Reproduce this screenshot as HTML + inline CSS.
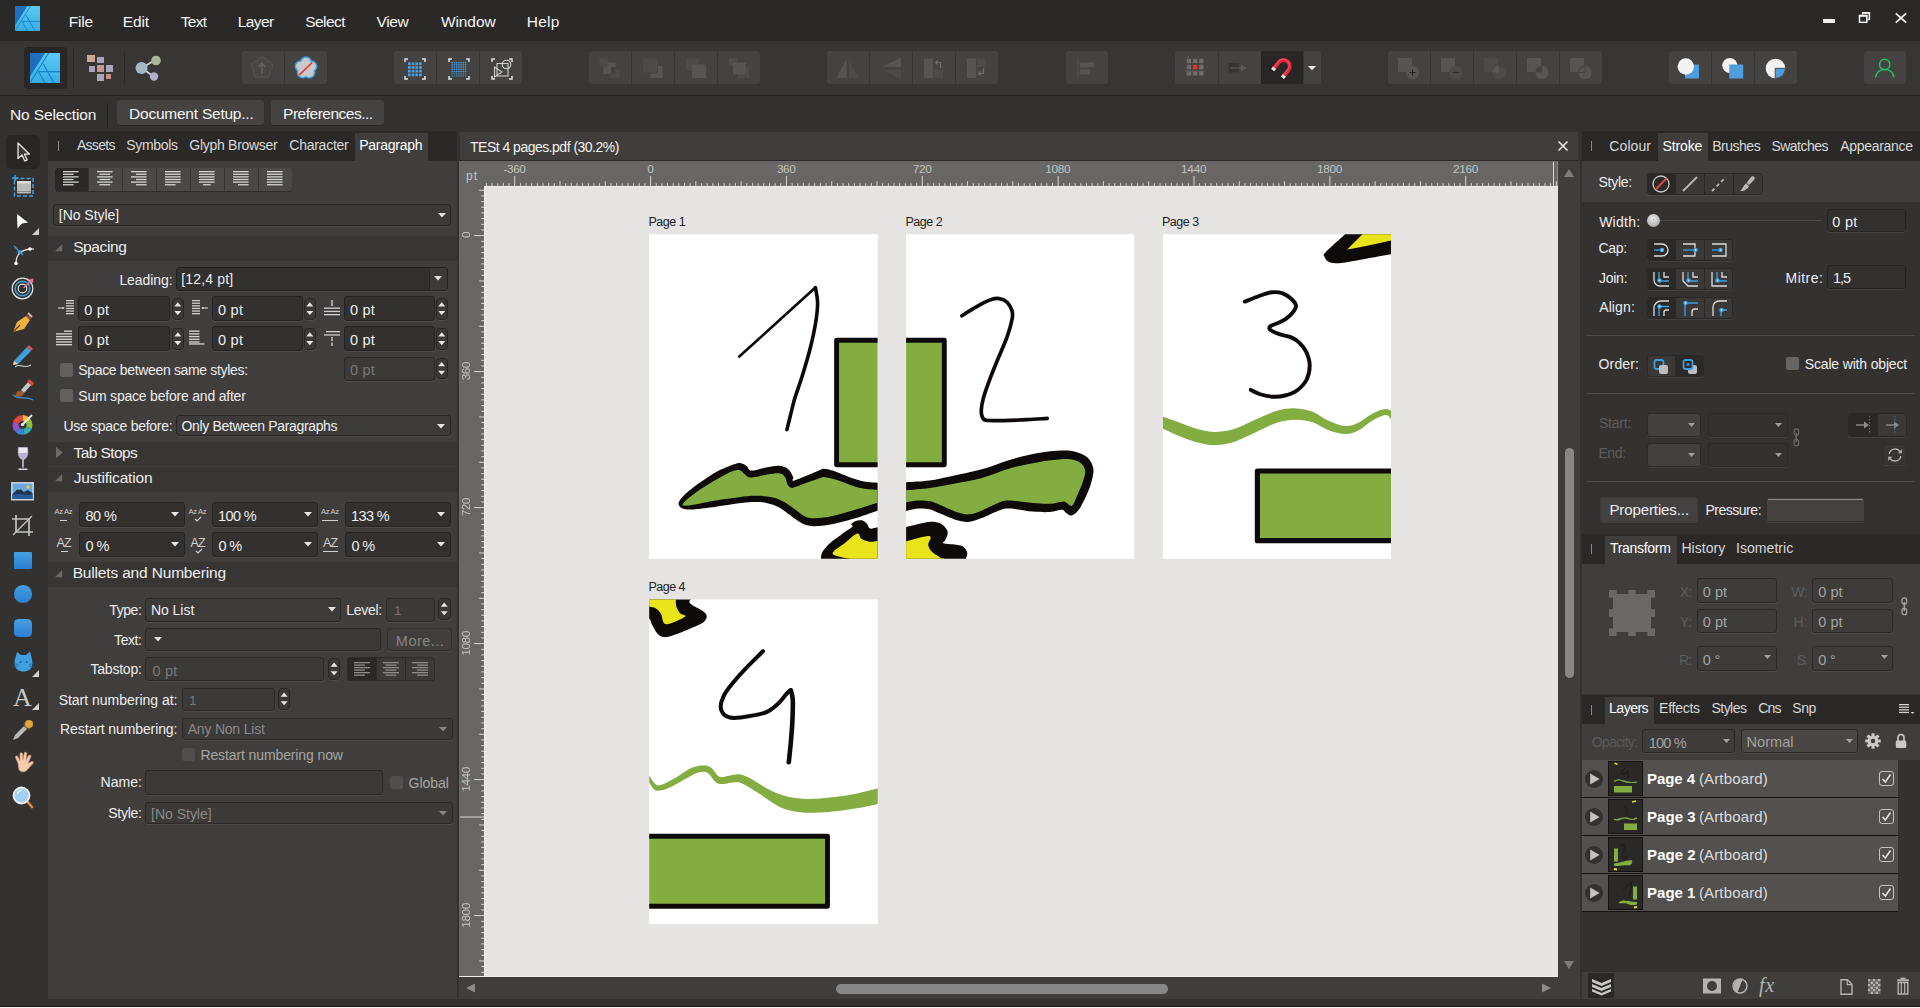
<!DOCTYPE html><html lang="en"><head><meta charset="utf-8"><title>Affinity Designer - TESt 4 pages.pdf</title><style>
*{box-sizing:border-box}
html,body{margin:0;padding:0}
body{width:1920px;height:1008px;overflow:hidden;position:relative;background:#333231;font-family:"Liberation Sans",sans-serif;}
body div,.a{position:absolute}
.t{white-space:nowrap}
svg{overflow:visible}
</style></head><body>
<!-- frame -->
<div style="left:0px;top:0px;width:1920px;height:41px;background:#2a2928"></div>
<div style="left:0px;top:41px;width:1920px;height:54px;background:#373635"></div>
<div style="left:0px;top:95px;width:1920px;height:1px;background:#222120"></div>
<div style="left:0px;top:96px;width:1920px;height:35px;background:#333231"></div>
<svg class="a" style="left:15px;top:6px;" width="25" height="25" viewBox="0 0 25 25"><g transform="scale(1.0)"><defs><linearGradient id="lg1" x1="0" y1="0" x2="0" y2="1"><stop offset="0" stop-color="#5ccbf5"/><stop offset="1" stop-color="#34ace4"/></linearGradient></defs><rect x="0" y="0" width="25" height="25" rx="0.5" fill="url(#lg1)"/><path d="M0 0H12.5L0 19.5Z" fill="#1e6fbe"/><path d="M15.5 0L0 25M7 15.5H25M11 9L20 25M7 15.5L12.5 25" stroke="#1a7fc4" stroke-width="0.9" fill="none"/></g></svg>
<div class="t" style="left:68.76px;top:10.50px;font-size:15.5px;line-height:22px;color:#f4f4f4;letter-spacing:-0.173px;">File</div>
<div class="t" style="left:122.76px;top:10.50px;font-size:15.5px;line-height:22px;color:#f4f4f4;letter-spacing:-0.114px;">Edit</div>
<div class="t" style="left:180.69px;top:10.50px;font-size:15.5px;line-height:22px;color:#f4f4f4;letter-spacing:-0.659px;">Text</div>
<div class="t" style="left:237.76px;top:10.50px;font-size:15.5px;line-height:22px;color:#f4f4f4;letter-spacing:-0.569px;">Layer</div>
<div class="t" style="left:305.30px;top:10.50px;font-size:15.5px;line-height:22px;color:#f4f4f4;letter-spacing:-0.587px;">Select</div>
<div class="t" style="left:376.62px;top:10.50px;font-size:15.5px;line-height:22px;color:#f4f4f4;letter-spacing:-0.416px;">View</div>
<div class="t" style="left:440.92px;top:10.50px;font-size:15.5px;line-height:22px;color:#f4f4f4;letter-spacing:-0.081px;">Window</div>
<div class="t" style="left:526.76px;top:10.50px;font-size:15.5px;line-height:22px;color:#f4f4f4;letter-spacing:0.236px;">Help</div>
<div style="left:1823px;top:19px;width:11.5px;height:4px;background:#f0f0f0"></div>
<svg class="a" style="left:1858px;top:11px;" width="14" height="14" viewBox="0 0 14 14"><path d="M4.6 3.8V1.9H11.4V8.6H9.4" fill="none" stroke="#f4f4f4" stroke-width="1.5"/><rect x="4.2" y="1.2" width="7.9" height="1.5" fill="#f4f4f4"/><rect x="1.5" y="4.6" width="7.3" height="6.7" fill="none" stroke="#f4f4f4" stroke-width="1.5"/><rect x="0.8" y="3.9" width="8.7" height="1.8" fill="#f4f4f4"/></svg>
<svg class="a" style="left:1894px;top:11px;" width="14" height="14" viewBox="0 0 14 14"><path d="M1.8 2.4L12.2 11.6M12.2 2.4L1.8 11.6" stroke="#f4f4f4" stroke-width="1.9" fill="none"/></svg>
<div class="t" style="left:10.06px;top:103.50px;font-size:15.5px;line-height:22px;color:#f4f4f4;letter-spacing:-0.149px;">No Selection</div>
<div style="left:107px;top:101px;width:1px;height:26px;background:#262524"></div>
<div style="left:117px;top:100px;width:147px;height:25px;background:#444342;border-radius:3px;box-shadow:0 1px 0 #2a2928"></div>
<div class="t" style="left:129.06px;top:102.50px;font-size:15.5px;line-height:22px;color:#f4f4f4;letter-spacing:-0.232px;">Document Setup...</div>
<div style="left:271px;top:100px;width:113px;height:25px;background:#444342;border-radius:3px;box-shadow:0 1px 0 #2a2928"></div>
<div class="t" style="left:283.06px;top:102.50px;font-size:15.5px;line-height:22px;color:#f4f4f4;letter-spacing:-0.490px;">Preferences...</div>
<div style="left:24px;top:47px;width:43px;height:42px;background:#282726;border-radius:4px"></div><svg class="a" style="left:30px;top:53px;" width="30" height="30" viewBox="0 0 30 30"><g transform="scale(1.2)"><defs><linearGradient id="lg2" x1="0" y1="0" x2="0" y2="1"><stop offset="0" stop-color="#5ccbf5"/><stop offset="1" stop-color="#34ace4"/></linearGradient></defs><rect x="0" y="0" width="25" height="25" rx="0.5" fill="url(#lg2)"/><path d="M0 0H12.5L0 19.5Z" fill="#1e6fbe"/><path d="M15.5 0L0 25M7 15.5H25M11 9L20 25M7 15.5L12.5 25" stroke="#1a7fc4" stroke-width="0.9" fill="none"/></g></svg><div style="left:73px;top:48px;width:1px;height:40px;background:#2a2928"></div><div style="left:87px;top:55px;width:8px;height:7px;background:#c9a896"></div><div style="left:97px;top:57px;width:7px;height:6px;background:#a9a5b6"></div><div style="left:89px;top:66px;width:6px;height:6px;background:#a9a5b6"></div><div style="left:97px;top:65px;width:7px;height:7px;background:#c49a90"></div><div style="left:106px;top:65px;width:7px;height:7px;background:#a9a5b6"></div><div style="left:97px;top:74px;width:7px;height:7px;background:#a9a5b6"></div><div style="left:106px;top:74px;width:5px;height:5px;background:#c98f8f"></div><div style="left:124px;top:52px;width:1px;height:32px;background:#2a2928"></div><svg class="a" style="left:134px;top:54px;" width="28" height="28" viewBox="0 0 28 28"><path d="M8 14L21 6M8 14L20 23" stroke="#d8d8d8" stroke-width="1.6"/><circle cx="7.5" cy="14" r="6" fill="#a3b8c4"/><circle cx="22" cy="6.5" r="4.8" fill="#a9b598"/><circle cx="20" cy="22.5" r="4.2" fill="#b5aecb"/></svg><div style="left:242px;top:51px;width:85.3px;height:33px;background:#444342;border-radius:3px"></div><div style="left:284.15px;top:51px;width:1px;height:33px;background:#373635"></div><div style="left:394px;top:51px;width:128.3px;height:33px;background:#444342;border-radius:3px"></div><div style="left:436.27px;top:51px;width:1px;height:33px;background:#373635"></div><div style="left:479.03px;top:51px;width:1px;height:33px;background:#373635"></div><div style="left:589px;top:51px;width:171px;height:33px;background:#444342;border-radius:3px"></div><div style="left:631.25px;top:51px;width:1px;height:33px;background:#373635"></div><div style="left:674px;top:51px;width:1px;height:33px;background:#373635"></div><div style="left:716.75px;top:51px;width:1px;height:33px;background:#373635"></div><div style="left:826.7px;top:51px;width:171.6px;height:33px;background:#444342;border-radius:3px"></div><div style="left:869.1px;top:51px;width:1px;height:33px;background:#373635"></div><div style="left:912px;top:51px;width:1px;height:33px;background:#373635"></div><div style="left:954.9px;top:51px;width:1px;height:33px;background:#373635"></div><div style="left:1065.7px;top:51px;width:42.6px;height:33px;background:#444342;border-radius:3px"></div><div style="left:1175px;top:51px;width:146px;height:33px;background:#444342;border-radius:3px"></div><div style="left:1217.5px;top:51px;width:1px;height:33px;background:#373635"></div><div style="left:1260.5px;top:51px;width:42.8px;height:33px;background:#282726"></div><div style="left:1303px;top:51px;width:1px;height:33px;background:#373635"></div><div style="left:1387.7px;top:51px;width:214.6px;height:33px;background:#444342;border-radius:3px"></div><div style="left:1430.12px;top:51px;width:1px;height:33px;background:#373635"></div><div style="left:1473.04px;top:51px;width:1px;height:33px;background:#373635"></div><div style="left:1515.96px;top:51px;width:1px;height:33px;background:#373635"></div><div style="left:1558.88px;top:51px;width:1px;height:33px;background:#373635"></div><div style="left:1669px;top:51px;width:128.3px;height:33px;background:#444342;border-radius:3px"></div><div style="left:1711.27px;top:51px;width:1px;height:33px;background:#373635"></div><div style="left:1754.03px;top:51px;width:1px;height:33px;background:#373635"></div><div style="left:1864px;top:51px;width:42px;height:33px;background:#444342;border-radius:3px"></div>
<div style="left:0px;top:1006px;width:1920px;height:1px;background:#1c1b1a"></div>
<div style="left:0px;top:1007px;width:1920px;height:1px;background:#f4f4f4"></div>
<!-- tbicons -->
<svg class="a" style="left:248px;top:54px;" width="28" height="28" viewBox="-14.0 -14.0 28 28"><circle cx="0.00" cy="-5.60" r="5.80" fill="#525150"/><circle cx="5.33" cy="-1.73" r="5.80" fill="#525150"/><circle cx="3.29" cy="4.53" r="5.80" fill="#525150"/><circle cx="-3.29" cy="4.53" r="5.80" fill="#525150"/><circle cx="-5.33" cy="-1.73" r="5.80" fill="#525150"/><circle cx="0.00" cy="-5.60" r="4.6" fill="#484746"/><circle cx="5.33" cy="-1.73" r="4.6" fill="#484746"/><circle cx="3.29" cy="4.53" r="4.6" fill="#484746"/><circle cx="-3.29" cy="4.53" r="4.6" fill="#484746"/><circle cx="-5.33" cy="-1.73" r="4.6" fill="#484746"/><circle r="5.6" fill="#484746"/><path d="M0 5.5V-3.5M-3 -1.2L0 -4.5L3 -1.2" stroke="#636261" stroke-width="1.7" fill="none"/></svg><svg class="a" style="left:292px;top:54px;" width="28" height="28" viewBox="-14.0 -14.0 28 28"><circle cx="0.00" cy="-5.60" r="6.10" fill="#3f9be0"/><circle cx="5.33" cy="-1.73" r="6.10" fill="#3f9be0"/><circle cx="3.29" cy="4.53" r="6.10" fill="#3f9be0"/><circle cx="-3.29" cy="4.53" r="6.10" fill="#3f9be0"/><circle cx="-5.33" cy="-1.73" r="6.10" fill="#3f9be0"/><circle cx="0.00" cy="-5.60" r="4.6" fill="#c8c8c8"/><circle cx="5.33" cy="-1.73" r="4.6" fill="#c8c8c8"/><circle cx="3.29" cy="4.53" r="4.6" fill="#c8c8c8"/><circle cx="-3.29" cy="4.53" r="4.6" fill="#c8c8c8"/><circle cx="-5.33" cy="-1.73" r="4.6" fill="#c8c8c8"/><circle r="5.6" fill="#c8c8c8"/><path d="M-6.8 7L6.2 -5.5" stroke="#e9302c" stroke-width="1.6"/></svg><svg class="a" style="left:400.5px;top:54.5px;" width="28" height="28" viewBox="-14.0 -14.0 28 28"><path d="M-10 -7V-10H-7M7 -10H10V-7M10 7V10H7M-7 10H-10V7" stroke="#e2e2e2" stroke-width="1.5" fill="none"/><rect x="-7.0" y="-6.6" width="2.7" height="2.7" fill="#4a9fe0"/><rect x="-7.0" y="-2.9" width="2.7" height="2.7" fill="#4a9fe0"/><rect x="-7.0" y="0.8" width="2.7" height="2.7" fill="#4a9fe0"/><rect x="-7.0" y="4.5" width="2.7" height="2.7" fill="#4a9fe0"/><rect x="-3.3" y="-6.6" width="2.7" height="2.7" fill="#4a9fe0"/><rect x="-3.3" y="-2.9" width="2.7" height="2.7" fill="#4a9fe0"/><rect x="-3.3" y="0.8" width="2.7" height="2.7" fill="#4a9fe0"/><rect x="-3.3" y="4.5" width="2.7" height="2.7" fill="#4a9fe0"/><rect x="0.4" y="-6.6" width="2.7" height="2.7" fill="#4a9fe0"/><rect x="0.4" y="-2.9" width="2.7" height="2.7" fill="#4a9fe0"/><rect x="0.4" y="0.8" width="2.7" height="2.7" fill="#4a9fe0"/><rect x="0.4" y="4.5" width="2.7" height="2.7" fill="#4a9fe0"/><rect x="4.1" y="-6.6" width="2.7" height="2.7" fill="#4a9fe0"/><rect x="4.1" y="-2.9" width="2.7" height="2.7" fill="#4a9fe0"/><rect x="4.1" y="0.8" width="2.7" height="2.7" fill="#4a9fe0"/><rect x="4.1" y="4.5" width="2.7" height="2.7" fill="#4a9fe0"/></svg><svg class="a" style="left:444.5px;top:54.5px;" width="28" height="28" viewBox="-14.0 -14.0 28 28"><path d="M-10 -7V-10H-7M7 -10H10V-7M10 7V10H7M-7 10H-10V7" stroke="#e2e2e2" stroke-width="1.5" fill="none"/><rect x="-7.4" y="-7.0" width="1.4" height="1.4" fill="#4a9fe0" opacity="0.95"/><rect x="-7.4" y="-4.8" width="1.4" height="1.4" fill="#4a9fe0" opacity="0.95"/><rect x="-7.4" y="-2.6" width="1.4" height="1.4" fill="#4a9fe0" opacity="0.95"/><rect x="-7.4" y="-0.4" width="1.4" height="1.4" fill="#4a9fe0" opacity="0.95"/><rect x="-7.4" y="1.8" width="1.4" height="1.4" fill="#4a9fe0" opacity="0.95"/><rect x="-7.4" y="4.0" width="1.4" height="1.4" fill="#4a9fe0" opacity="0.6"/><rect x="-7.4" y="6.2" width="1.4" height="1.4" fill="#4a9fe0" opacity="0.6"/><rect x="-5.2" y="-7.0" width="1.4" height="1.4" fill="#4a9fe0" opacity="0.95"/><rect x="-5.2" y="-4.8" width="1.4" height="1.4" fill="#4a9fe0" opacity="0.95"/><rect x="-5.2" y="-2.6" width="1.4" height="1.4" fill="#4a9fe0" opacity="0.95"/><rect x="-5.2" y="-0.4" width="1.4" height="1.4" fill="#4a9fe0" opacity="0.95"/><rect x="-5.2" y="1.8" width="1.4" height="1.4" fill="#4a9fe0" opacity="0.95"/><rect x="-5.2" y="4.0" width="1.4" height="1.4" fill="#4a9fe0" opacity="0.6"/><rect x="-5.2" y="6.2" width="1.4" height="1.4" fill="#4a9fe0" opacity="0.6"/><rect x="-3.0" y="-7.0" width="1.4" height="1.4" fill="#4a9fe0" opacity="0.95"/><rect x="-3.0" y="-4.8" width="1.4" height="1.4" fill="#4a9fe0" opacity="0.95"/><rect x="-3.0" y="-2.6" width="1.4" height="1.4" fill="#4a9fe0" opacity="0.95"/><rect x="-3.0" y="-0.4" width="1.4" height="1.4" fill="#4a9fe0" opacity="0.95"/><rect x="-3.0" y="1.8" width="1.4" height="1.4" fill="#4a9fe0" opacity="0.95"/><rect x="-3.0" y="4.0" width="1.4" height="1.4" fill="#4a9fe0" opacity="0.6"/><rect x="-3.0" y="6.2" width="1.4" height="1.4" fill="#4a9fe0" opacity="0.6"/><rect x="-0.8" y="-7.0" width="1.4" height="1.4" fill="#4a9fe0" opacity="0.95"/><rect x="-0.8" y="-4.8" width="1.4" height="1.4" fill="#4a9fe0" opacity="0.95"/><rect x="-0.8" y="-2.6" width="1.4" height="1.4" fill="#4a9fe0" opacity="0.95"/><rect x="-0.8" y="-0.4" width="1.4" height="1.4" fill="#4a9fe0" opacity="0.95"/><rect x="-0.8" y="1.8" width="1.4" height="1.4" fill="#4a9fe0" opacity="0.95"/><rect x="-0.8" y="4.0" width="1.4" height="1.4" fill="#4a9fe0" opacity="0.6"/><rect x="-0.8" y="6.2" width="1.4" height="1.4" fill="#4a9fe0" opacity="0.6"/><rect x="1.4" y="-7.0" width="1.4" height="1.4" fill="#4a9fe0" opacity="0.95"/><rect x="1.4" y="-4.8" width="1.4" height="1.4" fill="#4a9fe0" opacity="0.95"/><rect x="1.4" y="-2.6" width="1.4" height="1.4" fill="#4a9fe0" opacity="0.95"/><rect x="1.4" y="-0.4" width="1.4" height="1.4" fill="#4a9fe0" opacity="0.95"/><rect x="1.4" y="1.8" width="1.4" height="1.4" fill="#4a9fe0" opacity="0.95"/><rect x="1.4" y="4.0" width="1.4" height="1.4" fill="#4a9fe0" opacity="0.6"/><rect x="1.4" y="6.2" width="1.4" height="1.4" fill="#4a9fe0" opacity="0.6"/><rect x="3.6" y="-7.0" width="1.4" height="1.4" fill="#4a9fe0" opacity="0.95"/><rect x="3.6" y="-4.8" width="1.4" height="1.4" fill="#4a9fe0" opacity="0.95"/><rect x="3.6" y="-2.6" width="1.4" height="1.4" fill="#4a9fe0" opacity="0.95"/><rect x="3.6" y="-0.4" width="1.4" height="1.4" fill="#4a9fe0" opacity="0.95"/><rect x="3.6" y="1.8" width="1.4" height="1.4" fill="#4a9fe0" opacity="0.95"/><rect x="3.6" y="4.0" width="1.4" height="1.4" fill="#4a9fe0" opacity="0.6"/><rect x="3.6" y="6.2" width="1.4" height="1.4" fill="#4a9fe0" opacity="0.6"/><rect x="5.8" y="-7.0" width="1.4" height="1.4" fill="#4a9fe0" opacity="0.95"/><rect x="5.8" y="-4.8" width="1.4" height="1.4" fill="#4a9fe0" opacity="0.95"/><rect x="5.8" y="-2.6" width="1.4" height="1.4" fill="#4a9fe0" opacity="0.95"/><rect x="5.8" y="-0.4" width="1.4" height="1.4" fill="#4a9fe0" opacity="0.95"/><rect x="5.8" y="1.8" width="1.4" height="1.4" fill="#4a9fe0" opacity="0.95"/><rect x="5.8" y="4.0" width="1.4" height="1.4" fill="#4a9fe0" opacity="0.6"/><rect x="5.8" y="6.2" width="1.4" height="1.4" fill="#4a9fe0" opacity="0.6"/></svg><svg class="a" style="left:487.5px;top:54.5px;" width="28" height="28" viewBox="-14.0 -14.0 28 28"><path d="M-10 -7V-10H-7M7 -10H10V-7M10 7V10H7M-7 10H-10V7" stroke="#e2e2e2" stroke-width="1.5" fill="none"/><rect x="-5" y="-5.5" width="11" height="12.5" fill="none" stroke="#cfcfcf" stroke-width="1.1"/><circle cx="4.5" cy="-4.5" r="4.3" fill="none" stroke="#cfcfcf" stroke-width="1.1"/><path d="M-7.5 -2V8L0 3Z" fill="none" stroke="#cfcfcf" stroke-width="1.1"/></svg><svg class="a" style="left:596.38px;top:53.5px;" width="28" height="28" viewBox="-14.0 -14.0 28 28"><rect x="-10.5" y="-9.5" width="8" height="8" fill="#4c4b4a"/><rect x="-6.5" y="-5.5" width="12" height="11.5" fill="#565554"/><rect x="-6.5" y="-5.5" width="4" height="4.5" fill="#4c4b4a"/><rect x="1" y="2" width="8.5" height="8" fill="#4c4b4a"/><rect x="1" y="-1" width="4.5" height="7" fill="#434241"/><rect x="-6.5" y="6" width="7.5" height="2" fill="#434241"/></svg><svg class="a" style="left:639.12px;top:53.5px;" width="28" height="28" viewBox="-14.0 -14.0 28 28"><rect x="-10" y="-9.5" width="14" height="14" fill="#4c4b4a"/><path d="M5 -2H9.5V10H-2.5V5.5H5Z" fill="#565554"/></svg><svg class="a" style="left:681.88px;top:53.5px;" width="28" height="28" viewBox="-14.0 -14.0 28 28"><rect x="-10" y="-9.5" width="13" height="12" fill="#4c4b4a"/><rect x="-4" y="-3.5" width="14" height="13.5" fill="#565554"/></svg><svg class="a" style="left:724.62px;top:53.5px;" width="28" height="28" viewBox="-14.0 -14.0 28 28"><rect x="-10" y="-9.5" width="8" height="7" fill="#4c4b4a"/><rect x="-2" y="-1" width="12" height="11" fill="#4c4b4a"/><rect x="-6" y="-5.5" width="12.5" height="12" fill="#565554"/></svg><svg class="a" style="left:834.15px;top:53.5px;" width="28" height="28" viewBox="-14.0 -14.0 28 28"><path d="M-1.5 -9V10H-11.5Z" fill="#565554"/><path d="M1 -9V10H10.5Z" fill="#4c4b4a"/></svg><svg class="a" style="left:877.05px;top:53.5px;" width="28" height="28" viewBox="-14.0 -14.0 28 28"><path d="M10 -10.5V-1H-9.5Z" fill="#565554"/><path d="M-9.5 1.5H10V11Z" fill="#4c4b4a"/></svg><svg class="a" style="left:919.95px;top:53.5px;" width="28" height="28" viewBox="-14.0 -14.0 28 28"><rect x="-10" y="-9.5" width="9" height="19.5" fill="#565554"/><rect x="0" y="1.5" width="9" height="8.5" fill="#4c4b4a"/><path d="M6.5 0V-5.5H2M3.8 -7.5L1.5 -5.5L3.8 -3.5" stroke="#6e6d6c" stroke-width="1.2" fill="none"/></svg><svg class="a" style="left:962.85px;top:53.5px;" width="28" height="28" viewBox="-14.0 -14.0 28 28"><rect x="-10" y="-9.5" width="9" height="19.5" fill="#565554"/><rect x="0" y="-9.5" width="8.5" height="8.5" fill="#4c4b4a"/><path d="M6.5 0.5V5.5H2M3.8 3.5L1.5 5.5L3.8 7.5" stroke="#6e6d6c" stroke-width="1.2" fill="none"/></svg><svg class="a" style="left:1073px;top:53.5px;" width="28" height="28" viewBox="-14.0 -14.0 28 28"><rect x="-10" y="-9.5" width="1.5" height="19.5" fill="#4c4b4a"/><rect x="-7" y="-5.5" width="14.5" height="4.8" fill="#565554"/><rect x="-7" y="1.5" width="10" height="4.8" fill="#565554"/></svg><svg class="a" style="left:1180.8px;top:53.3px;" width="28" height="28" viewBox="-14.0 -14.0 28 28"><rect x="-8.3" y="-8.3" width="4.4" height="4.4" fill="#6e6d6c"/><rect x="-8.3" y="-2.1" width="4.4" height="4.4" fill="#6e6d6c"/><rect x="-8.3" y="4.1" width="4.4" height="4.4" fill="#6e6d6c"/><rect x="-2.1" y="-8.3" width="4.4" height="4.4" fill="#6e6d6c"/><rect x="-2.1" y="-2.1" width="4.4" height="4.4" fill="#e8302c"/><rect x="-2.1" y="4.1" width="4.4" height="4.4" fill="#6e6d6c"/><rect x="4.1" y="-8.3" width="4.4" height="4.4" fill="#6e6d6c"/><rect x="4.1" y="-2.1" width="4.4" height="4.4" fill="#6e6d6c"/><rect x="4.1" y="4.1" width="4.4" height="4.4" fill="#6e6d6c"/><path d="M-6.5 -11V10M-10.5 4H10.5" stroke="#5e5d5c" stroke-width="0.8"/></svg><svg class="a" style="left:1224.5px;top:53.6px;" width="28" height="28" viewBox="-14.0 -14.0 28 28"><rect x="-10.5" y="-5" width="10.5" height="9.5" fill="#363534"/><path d="M-9 0H3" stroke="#5c5b5a" stroke-width="1.2"/><path d="M2 -3.2L7.5 0L2 3.2Z" fill="#5c5b5a"/></svg><svg class="a" style="left:1269px;top:53.3px;" width="28" height="28" viewBox="-14.0 -14.0 28 28"><g transform="rotate(38)"><path d="M-6.2 7.5V-1A6.2 6.2 0 0 1 6.2 -1V7.5" fill="none" stroke="#e0243c" stroke-width="4"/><path d="M-6.2 7.5V-1A6.2 6.2 0 0 1 6.2 -1V7.5" fill="none" stroke="#f05a6a" stroke-width="1" transform="translate(-0.9 -0.3)"/><rect x="-8.2" y="5.8" width="4" height="3" fill="#e4e4e4"/><rect x="4.2" y="5.8" width="4" height="3" fill="#e4e4e4"/></g></svg><svg class="a" style="left:1308.00px;top:65.90px" width="8" height="4.2" viewBox="0 0 8 4.2"><path d="M0 0H8L4.0 4.2Z" fill="#f2f2f2"/></svg><svg class="a" style="left:1395.16px;top:54px;" width="28" height="28" viewBox="-14.0 -14.0 28 28"><rect x="-11" y="-10" width="14" height="14" fill="#565554"/><circle cx="3.5" cy="4.5" r="6.6" fill="#565554"/><path d="M0.5 4.5H6.5M3.5 1.5V7.5" stroke="#232221" stroke-width="1.1"/></svg><svg class="a" style="left:1438.08px;top:54px;" width="28" height="28" viewBox="-14.0 -14.0 28 28"><rect x="-11" y="-10" width="14" height="14" fill="#565554"/><circle cx="4" cy="4.5" r="6.6" fill="#4c4b4a"/><path d="M1 4.5H7" stroke="#2c2b2a" stroke-width="1.1"/></svg><svg class="a" style="left:1481px;top:54px;" width="28" height="28" viewBox="-14.0 -14.0 28 28"><rect x="-11" y="-10" width="14" height="14" fill="#4c4b4a"/><circle cx="4" cy="4.5" r="6.6" fill="#4c4b4a"/><path d="M4 4.5V-2.1A6.6 6.6 0 0 0 -2.6 4.5Z" fill="#5a5958"/></svg><svg class="a" style="left:1523.92px;top:54px;" width="28" height="28" viewBox="-14.0 -14.0 28 28"><rect x="-11" y="-10" width="14" height="14" fill="#565554"/><circle cx="4" cy="4.5" r="6.6" fill="#565554"/><path d="M4 4.5V-2.1A6.6 6.6 0 0 0 -2.6 4.5Z" fill="#434241"/></svg><svg class="a" style="left:1566.84px;top:54px;" width="28" height="28" viewBox="-14.0 -14.0 28 28"><rect x="-11" y="-10" width="14" height="14" fill="#565554"/><circle cx="4" cy="4.5" r="6.6" fill="#565554"/><path d="M4 4.5V-2.1A6.6 6.6 0 0 0 -2.6 4.5Z" fill="none" stroke="#434241" stroke-width="0.9"/></svg><svg class="a" style="left:1676.12px;top:53.5px;" width="28" height="28" viewBox="-14.0 -14.0 28 28"><rect x="-5" y="-3.5" width="14" height="14" fill="#4f9edb"/><circle cx="-4.2" cy="-1.5" r="8.2" fill="#f3f2f2"/></svg><svg class="a" style="left:1718.88px;top:53.5px;" width="28" height="28" viewBox="-14.0 -14.0 28 28"><circle cx="-3.2" cy="-2.5" r="7.6" fill="#f3f2f2"/><rect x="-3.8" y="-3.5" width="14" height="14" fill="#4f9edb"/></svg><svg class="a" style="left:1761.62px;top:53.5px;" width="28" height="28" viewBox="-14.0 -14.0 28 28"><circle cx="-0.5" cy="0.5" r="9.8" fill="#f3f2f2"/><path d="M-0.8 0.3H9.3A9.8 9.8 0 0 1 -0.8 10.3Z" fill="#4f9edb" stroke="#434241" stroke-width="0.9"/></svg><svg class="a" style="left:1871px;top:54px;" width="28" height="28" viewBox="-14.0 -14.0 28 28"><circle cx="-0.3" cy="-3.5" r="5.2" fill="none" stroke="#21c064" stroke-width="1.5"/><path d="M-9.5 9.5A9.3 9.3 0 0 1 9 9.5" fill="none" stroke="#21c064" stroke-width="1.5"/></svg>
<!-- canvas -->
<div style="left:460px;top:132px;width:1118px;height:29px;background:#3f3e3d"></div>
<div class="t" style="left:470.02px;top:137.00px;font-size:14px;line-height:20px;color:#f2f2f2;letter-spacing:-0.511px;">TESt 4 pages.pdf (30.2%)</div>
<svg class="a" style="left:1557px;top:140px;" width="12" height="12" viewBox="0 0 12 12"><path d="M1.5 1.5L10.5 10.5M10.5 1.5L1.5 10.5" stroke="#f0f0f0" stroke-width="1.5" fill="none"/></svg>
<div style="left:459px;top:161px;width:1099px;height:25px;background:#686765"></div>
<div style="left:459px;top:161px;width:25px;height:815px;background:#686765"></div>
<div style="left:459px;top:160px;width:1119px;height:1px;background:#2a2928"></div>
<div style="left:484px;top:186px;width:1074px;height:790px;background:#e5e4e3"></div>
<svg class="a" style="left:459px;top:161px;" width="1099" height="25" viewBox="0 0 1099 25"><rect x="26.90" y="22.2" width="1" height="2.8" fill="#d6d6d5"/><rect x="32.56" y="22.2" width="1" height="2.8" fill="#d6d6d5"/><rect x="38.22" y="22.2" width="1" height="2.8" fill="#d6d6d5"/><rect x="43.88" y="22.2" width="1" height="2.8" fill="#d6d6d5"/><rect x="49.54" y="22.2" width="1" height="2.8" fill="#d6d6d5"/><rect x="55.20" y="15" width="1" height="10" fill="#d6d6d5"/><rect x="60.86" y="22.2" width="1" height="2.8" fill="#d6d6d5"/><rect x="66.52" y="22.2" width="1" height="2.8" fill="#d6d6d5"/><rect x="72.18" y="22.2" width="1" height="2.8" fill="#d6d6d5"/><rect x="77.84" y="22.2" width="1" height="2.8" fill="#d6d6d5"/><rect x="83.50" y="22.2" width="1" height="2.8" fill="#d6d6d5"/><rect x="89.16" y="22.2" width="1" height="2.8" fill="#d6d6d5"/><rect x="94.83" y="22.2" width="1" height="2.8" fill="#d6d6d5"/><rect x="100.49" y="20.2" width="1" height="4.8" fill="#d6d6d5"/><rect x="106.15" y="22.2" width="1" height="2.8" fill="#d6d6d5"/><rect x="111.81" y="22.2" width="1" height="2.8" fill="#d6d6d5"/><rect x="117.47" y="22.2" width="1" height="2.8" fill="#d6d6d5"/><rect x="123.13" y="22.2" width="1" height="2.8" fill="#d6d6d5"/><rect x="128.79" y="22.2" width="1" height="2.8" fill="#d6d6d5"/><rect x="134.45" y="22.2" width="1" height="2.8" fill="#d6d6d5"/><rect x="140.11" y="22.2" width="1" height="2.8" fill="#d6d6d5"/><rect x="145.77" y="20.2" width="1" height="4.8" fill="#d6d6d5"/><rect x="151.43" y="22.2" width="1" height="2.8" fill="#d6d6d5"/><rect x="157.09" y="22.2" width="1" height="2.8" fill="#d6d6d5"/><rect x="162.76" y="22.2" width="1" height="2.8" fill="#d6d6d5"/><rect x="168.42" y="22.2" width="1" height="2.8" fill="#d6d6d5"/><rect x="174.08" y="22.2" width="1" height="2.8" fill="#d6d6d5"/><rect x="179.74" y="22.2" width="1" height="2.8" fill="#d6d6d5"/><rect x="185.40" y="22.2" width="1" height="2.8" fill="#d6d6d5"/><rect x="191.06" y="15" width="1" height="10" fill="#d6d6d5"/><rect x="196.72" y="22.2" width="1" height="2.8" fill="#d6d6d5"/><rect x="202.38" y="22.2" width="1" height="2.8" fill="#d6d6d5"/><rect x="208.04" y="22.2" width="1" height="2.8" fill="#d6d6d5"/><rect x="213.70" y="22.2" width="1" height="2.8" fill="#d6d6d5"/><rect x="219.36" y="22.2" width="1" height="2.8" fill="#d6d6d5"/><rect x="225.02" y="22.2" width="1" height="2.8" fill="#d6d6d5"/><rect x="230.69" y="22.2" width="1" height="2.8" fill="#d6d6d5"/><rect x="236.35" y="20.2" width="1" height="4.8" fill="#d6d6d5"/><rect x="242.01" y="22.2" width="1" height="2.8" fill="#d6d6d5"/><rect x="247.67" y="22.2" width="1" height="2.8" fill="#d6d6d5"/><rect x="253.33" y="22.2" width="1" height="2.8" fill="#d6d6d5"/><rect x="258.99" y="22.2" width="1" height="2.8" fill="#d6d6d5"/><rect x="264.65" y="22.2" width="1" height="2.8" fill="#d6d6d5"/><rect x="270.31" y="22.2" width="1" height="2.8" fill="#d6d6d5"/><rect x="275.97" y="22.2" width="1" height="2.8" fill="#d6d6d5"/><rect x="281.63" y="20.2" width="1" height="4.8" fill="#d6d6d5"/><rect x="287.29" y="22.2" width="1" height="2.8" fill="#d6d6d5"/><rect x="292.95" y="22.2" width="1" height="2.8" fill="#d6d6d5"/><rect x="298.62" y="22.2" width="1" height="2.8" fill="#d6d6d5"/><rect x="304.28" y="22.2" width="1" height="2.8" fill="#d6d6d5"/><rect x="309.94" y="22.2" width="1" height="2.8" fill="#d6d6d5"/><rect x="315.60" y="22.2" width="1" height="2.8" fill="#d6d6d5"/><rect x="321.26" y="22.2" width="1" height="2.8" fill="#d6d6d5"/><rect x="326.92" y="15" width="1" height="10" fill="#d6d6d5"/><rect x="332.58" y="22.2" width="1" height="2.8" fill="#d6d6d5"/><rect x="338.24" y="22.2" width="1" height="2.8" fill="#d6d6d5"/><rect x="343.90" y="22.2" width="1" height="2.8" fill="#d6d6d5"/><rect x="349.56" y="22.2" width="1" height="2.8" fill="#d6d6d5"/><rect x="355.22" y="22.2" width="1" height="2.8" fill="#d6d6d5"/><rect x="360.88" y="22.2" width="1" height="2.8" fill="#d6d6d5"/><rect x="366.55" y="22.2" width="1" height="2.8" fill="#d6d6d5"/><rect x="372.21" y="20.2" width="1" height="4.8" fill="#d6d6d5"/><rect x="377.87" y="22.2" width="1" height="2.8" fill="#d6d6d5"/><rect x="383.53" y="22.2" width="1" height="2.8" fill="#d6d6d5"/><rect x="389.19" y="22.2" width="1" height="2.8" fill="#d6d6d5"/><rect x="394.85" y="22.2" width="1" height="2.8" fill="#d6d6d5"/><rect x="400.51" y="22.2" width="1" height="2.8" fill="#d6d6d5"/><rect x="406.17" y="22.2" width="1" height="2.8" fill="#d6d6d5"/><rect x="411.83" y="22.2" width="1" height="2.8" fill="#d6d6d5"/><rect x="417.49" y="20.2" width="1" height="4.8" fill="#d6d6d5"/><rect x="423.15" y="22.2" width="1" height="2.8" fill="#d6d6d5"/><rect x="428.81" y="22.2" width="1" height="2.8" fill="#d6d6d5"/><rect x="434.48" y="22.2" width="1" height="2.8" fill="#d6d6d5"/><rect x="440.14" y="22.2" width="1" height="2.8" fill="#d6d6d5"/><rect x="445.80" y="22.2" width="1" height="2.8" fill="#d6d6d5"/><rect x="451.46" y="22.2" width="1" height="2.8" fill="#d6d6d5"/><rect x="457.12" y="22.2" width="1" height="2.8" fill="#d6d6d5"/><rect x="462.78" y="15" width="1" height="10" fill="#d6d6d5"/><rect x="468.44" y="22.2" width="1" height="2.8" fill="#d6d6d5"/><rect x="474.10" y="22.2" width="1" height="2.8" fill="#d6d6d5"/><rect x="479.76" y="22.2" width="1" height="2.8" fill="#d6d6d5"/><rect x="485.42" y="22.2" width="1" height="2.8" fill="#d6d6d5"/><rect x="491.08" y="22.2" width="1" height="2.8" fill="#d6d6d5"/><rect x="496.74" y="22.2" width="1" height="2.8" fill="#d6d6d5"/><rect x="502.41" y="22.2" width="1" height="2.8" fill="#d6d6d5"/><rect x="508.07" y="20.2" width="1" height="4.8" fill="#d6d6d5"/><rect x="513.73" y="22.2" width="1" height="2.8" fill="#d6d6d5"/><rect x="519.39" y="22.2" width="1" height="2.8" fill="#d6d6d5"/><rect x="525.05" y="22.2" width="1" height="2.8" fill="#d6d6d5"/><rect x="530.71" y="22.2" width="1" height="2.8" fill="#d6d6d5"/><rect x="536.37" y="22.2" width="1" height="2.8" fill="#d6d6d5"/><rect x="542.03" y="22.2" width="1" height="2.8" fill="#d6d6d5"/><rect x="547.69" y="22.2" width="1" height="2.8" fill="#d6d6d5"/><rect x="553.35" y="20.2" width="1" height="4.8" fill="#d6d6d5"/><rect x="559.01" y="22.2" width="1" height="2.8" fill="#d6d6d5"/><rect x="564.67" y="22.2" width="1" height="2.8" fill="#d6d6d5"/><rect x="570.34" y="22.2" width="1" height="2.8" fill="#d6d6d5"/><rect x="576.00" y="22.2" width="1" height="2.8" fill="#d6d6d5"/><rect x="581.66" y="22.2" width="1" height="2.8" fill="#d6d6d5"/><rect x="587.32" y="22.2" width="1" height="2.8" fill="#d6d6d5"/><rect x="592.98" y="22.2" width="1" height="2.8" fill="#d6d6d5"/><rect x="598.64" y="15" width="1" height="10" fill="#d6d6d5"/><rect x="604.30" y="22.2" width="1" height="2.8" fill="#d6d6d5"/><rect x="609.96" y="22.2" width="1" height="2.8" fill="#d6d6d5"/><rect x="615.62" y="22.2" width="1" height="2.8" fill="#d6d6d5"/><rect x="621.28" y="22.2" width="1" height="2.8" fill="#d6d6d5"/><rect x="626.94" y="22.2" width="1" height="2.8" fill="#d6d6d5"/><rect x="632.61" y="22.2" width="1" height="2.8" fill="#d6d6d5"/><rect x="638.27" y="22.2" width="1" height="2.8" fill="#d6d6d5"/><rect x="643.93" y="20.2" width="1" height="4.8" fill="#d6d6d5"/><rect x="649.59" y="22.2" width="1" height="2.8" fill="#d6d6d5"/><rect x="655.25" y="22.2" width="1" height="2.8" fill="#d6d6d5"/><rect x="660.91" y="22.2" width="1" height="2.8" fill="#d6d6d5"/><rect x="666.57" y="22.2" width="1" height="2.8" fill="#d6d6d5"/><rect x="672.23" y="22.2" width="1" height="2.8" fill="#d6d6d5"/><rect x="677.89" y="22.2" width="1" height="2.8" fill="#d6d6d5"/><rect x="683.55" y="22.2" width="1" height="2.8" fill="#d6d6d5"/><rect x="689.21" y="20.2" width="1" height="4.8" fill="#d6d6d5"/><rect x="694.87" y="22.2" width="1" height="2.8" fill="#d6d6d5"/><rect x="700.53" y="22.2" width="1" height="2.8" fill="#d6d6d5"/><rect x="706.20" y="22.2" width="1" height="2.8" fill="#d6d6d5"/><rect x="711.86" y="22.2" width="1" height="2.8" fill="#d6d6d5"/><rect x="717.52" y="22.2" width="1" height="2.8" fill="#d6d6d5"/><rect x="723.18" y="22.2" width="1" height="2.8" fill="#d6d6d5"/><rect x="728.84" y="22.2" width="1" height="2.8" fill="#d6d6d5"/><rect x="734.50" y="15" width="1" height="10" fill="#d6d6d5"/><rect x="740.16" y="22.2" width="1" height="2.8" fill="#d6d6d5"/><rect x="745.82" y="22.2" width="1" height="2.8" fill="#d6d6d5"/><rect x="751.48" y="22.2" width="1" height="2.8" fill="#d6d6d5"/><rect x="757.14" y="22.2" width="1" height="2.8" fill="#d6d6d5"/><rect x="762.80" y="22.2" width="1" height="2.8" fill="#d6d6d5"/><rect x="768.46" y="22.2" width="1" height="2.8" fill="#d6d6d5"/><rect x="774.13" y="22.2" width="1" height="2.8" fill="#d6d6d5"/><rect x="779.79" y="20.2" width="1" height="4.8" fill="#d6d6d5"/><rect x="785.45" y="22.2" width="1" height="2.8" fill="#d6d6d5"/><rect x="791.11" y="22.2" width="1" height="2.8" fill="#d6d6d5"/><rect x="796.77" y="22.2" width="1" height="2.8" fill="#d6d6d5"/><rect x="802.43" y="22.2" width="1" height="2.8" fill="#d6d6d5"/><rect x="808.09" y="22.2" width="1" height="2.8" fill="#d6d6d5"/><rect x="813.75" y="22.2" width="1" height="2.8" fill="#d6d6d5"/><rect x="819.41" y="22.2" width="1" height="2.8" fill="#d6d6d5"/><rect x="825.07" y="20.2" width="1" height="4.8" fill="#d6d6d5"/><rect x="830.73" y="22.2" width="1" height="2.8" fill="#d6d6d5"/><rect x="836.39" y="22.2" width="1" height="2.8" fill="#d6d6d5"/><rect x="842.06" y="22.2" width="1" height="2.8" fill="#d6d6d5"/><rect x="847.72" y="22.2" width="1" height="2.8" fill="#d6d6d5"/><rect x="853.38" y="22.2" width="1" height="2.8" fill="#d6d6d5"/><rect x="859.04" y="22.2" width="1" height="2.8" fill="#d6d6d5"/><rect x="864.70" y="22.2" width="1" height="2.8" fill="#d6d6d5"/><rect x="870.36" y="15" width="1" height="10" fill="#d6d6d5"/><rect x="876.02" y="22.2" width="1" height="2.8" fill="#d6d6d5"/><rect x="881.68" y="22.2" width="1" height="2.8" fill="#d6d6d5"/><rect x="887.34" y="22.2" width="1" height="2.8" fill="#d6d6d5"/><rect x="893.00" y="22.2" width="1" height="2.8" fill="#d6d6d5"/><rect x="898.66" y="22.2" width="1" height="2.8" fill="#d6d6d5"/><rect x="904.32" y="22.2" width="1" height="2.8" fill="#d6d6d5"/><rect x="909.99" y="22.2" width="1" height="2.8" fill="#d6d6d5"/><rect x="915.65" y="20.2" width="1" height="4.8" fill="#d6d6d5"/><rect x="921.31" y="22.2" width="1" height="2.8" fill="#d6d6d5"/><rect x="926.97" y="22.2" width="1" height="2.8" fill="#d6d6d5"/><rect x="932.63" y="22.2" width="1" height="2.8" fill="#d6d6d5"/><rect x="938.29" y="22.2" width="1" height="2.8" fill="#d6d6d5"/><rect x="943.95" y="22.2" width="1" height="2.8" fill="#d6d6d5"/><rect x="949.61" y="22.2" width="1" height="2.8" fill="#d6d6d5"/><rect x="955.27" y="22.2" width="1" height="2.8" fill="#d6d6d5"/><rect x="960.93" y="20.2" width="1" height="4.8" fill="#d6d6d5"/><rect x="966.59" y="22.2" width="1" height="2.8" fill="#d6d6d5"/><rect x="972.26" y="22.2" width="1" height="2.8" fill="#d6d6d5"/><rect x="977.92" y="22.2" width="1" height="2.8" fill="#d6d6d5"/><rect x="983.58" y="22.2" width="1" height="2.8" fill="#d6d6d5"/><rect x="989.24" y="22.2" width="1" height="2.8" fill="#d6d6d5"/><rect x="994.90" y="22.2" width="1" height="2.8" fill="#d6d6d5"/><rect x="1000.56" y="22.2" width="1" height="2.8" fill="#d6d6d5"/><rect x="1006.22" y="15" width="1" height="10" fill="#d6d6d5"/><rect x="1011.88" y="22.2" width="1" height="2.8" fill="#d6d6d5"/><rect x="1017.54" y="22.2" width="1" height="2.8" fill="#d6d6d5"/><rect x="1023.20" y="22.2" width="1" height="2.8" fill="#d6d6d5"/><rect x="1028.86" y="22.2" width="1" height="2.8" fill="#d6d6d5"/><rect x="1034.52" y="22.2" width="1" height="2.8" fill="#d6d6d5"/><rect x="1040.18" y="22.2" width="1" height="2.8" fill="#d6d6d5"/><rect x="1045.85" y="22.2" width="1" height="2.8" fill="#d6d6d5"/><rect x="1051.51" y="20.2" width="1" height="4.8" fill="#d6d6d5"/><rect x="1057.17" y="22.2" width="1" height="2.8" fill="#d6d6d5"/><rect x="1062.83" y="22.2" width="1" height="2.8" fill="#d6d6d5"/><rect x="1068.49" y="22.2" width="1" height="2.8" fill="#d6d6d5"/><rect x="1074.15" y="22.2" width="1" height="2.8" fill="#d6d6d5"/><rect x="1079.81" y="22.2" width="1" height="2.8" fill="#d6d6d5"/><rect x="1085.47" y="22.2" width="1" height="2.8" fill="#d6d6d5"/><rect x="1091.13" y="22.2" width="1" height="2.8" fill="#d6d6d5"/><rect x="1096.79" y="20.2" width="1" height="4.8" fill="#d6d6d5"/><rect x="1094" y="1" width="1" height="24" fill="#d8d8d8"/></svg><div class="t" style="left:503.42px;top:160.50px;font-size:11.8px;line-height:17px;color:#c2c2c1;letter-spacing:-0.385px;">-360</div><div class="t" style="left:647.34px;top:160.50px;font-size:11.8px;line-height:17px;color:#c2c2c1;letter-spacing:-0.164px;">0</div><div class="t" style="left:776.90px;top:160.50px;font-size:11.8px;line-height:17px;color:#c2c2c1;letter-spacing:-0.331px;">360</div><div class="t" style="left:912.64px;top:160.50px;font-size:11.8px;line-height:17px;color:#c2c2c1;letter-spacing:-0.272px;">720</div><div class="t" style="left:1045.15px;top:160.50px;font-size:11.8px;line-height:17px;color:#c2c2c1;letter-spacing:-0.252px;">1080</div><div class="t" style="left:1181.02px;top:160.50px;font-size:11.8px;line-height:17px;color:#c2c2c1;letter-spacing:-0.252px;">1440</div><div class="t" style="left:1316.88px;top:160.50px;font-size:11.8px;line-height:17px;color:#c2c2c1;letter-spacing:-0.252px;">1800</div><div class="t" style="left:1453.03px;top:160.50px;font-size:11.8px;line-height:17px;color:#c2c2c1;letter-spacing:-0.351px;">2160</div><div class="t" style="left:466.12px;top:167.50px;font-size:12px;line-height:17px;color:#c2c2c1;letter-spacing:0.880px;">pt</div><svg class="a" style="left:459px;top:161px;" width="25" height="815" viewBox="0 0 25 815"><rect y="28.77" x="20.2" height="1" width="4.8" fill="#d6d6d5"/><rect y="34.43" x="22.2" height="1" width="2.8" fill="#d6d6d5"/><rect y="40.10" x="22.2" height="1" width="2.8" fill="#d6d6d5"/><rect y="45.77" x="22.2" height="1" width="2.8" fill="#d6d6d5"/><rect y="51.43" x="22.2" height="1" width="2.8" fill="#d6d6d5"/><rect y="57.10" x="22.2" height="1" width="2.8" fill="#d6d6d5"/><rect y="62.77" x="22.2" height="1" width="2.8" fill="#d6d6d5"/><rect y="68.43" x="22.2" height="1" width="2.8" fill="#d6d6d5"/><rect y="74.10" x="15" height="1" width="10" fill="#d6d6d5"/><rect y="79.77" x="22.2" height="1" width="2.8" fill="#d6d6d5"/><rect y="85.43" x="22.2" height="1" width="2.8" fill="#d6d6d5"/><rect y="91.10" x="22.2" height="1" width="2.8" fill="#d6d6d5"/><rect y="96.77" x="22.2" height="1" width="2.8" fill="#d6d6d5"/><rect y="102.43" x="22.2" height="1" width="2.8" fill="#d6d6d5"/><rect y="108.10" x="22.2" height="1" width="2.8" fill="#d6d6d5"/><rect y="113.77" x="22.2" height="1" width="2.8" fill="#d6d6d5"/><rect y="119.43" x="20.2" height="1" width="4.8" fill="#d6d6d5"/><rect y="125.10" x="22.2" height="1" width="2.8" fill="#d6d6d5"/><rect y="130.77" x="22.2" height="1" width="2.8" fill="#d6d6d5"/><rect y="136.43" x="22.2" height="1" width="2.8" fill="#d6d6d5"/><rect y="142.10" x="22.2" height="1" width="2.8" fill="#d6d6d5"/><rect y="147.77" x="22.2" height="1" width="2.8" fill="#d6d6d5"/><rect y="153.43" x="22.2" height="1" width="2.8" fill="#d6d6d5"/><rect y="159.10" x="22.2" height="1" width="2.8" fill="#d6d6d5"/><rect y="164.77" x="20.2" height="1" width="4.8" fill="#d6d6d5"/><rect y="170.43" x="22.2" height="1" width="2.8" fill="#d6d6d5"/><rect y="176.10" x="22.2" height="1" width="2.8" fill="#d6d6d5"/><rect y="181.77" x="22.2" height="1" width="2.8" fill="#d6d6d5"/><rect y="187.43" x="22.2" height="1" width="2.8" fill="#d6d6d5"/><rect y="193.10" x="22.2" height="1" width="2.8" fill="#d6d6d5"/><rect y="198.77" x="22.2" height="1" width="2.8" fill="#d6d6d5"/><rect y="204.43" x="22.2" height="1" width="2.8" fill="#d6d6d5"/><rect y="210.10" x="15" height="1" width="10" fill="#d6d6d5"/><rect y="215.77" x="22.2" height="1" width="2.8" fill="#d6d6d5"/><rect y="221.43" x="22.2" height="1" width="2.8" fill="#d6d6d5"/><rect y="227.10" x="22.2" height="1" width="2.8" fill="#d6d6d5"/><rect y="232.77" x="22.2" height="1" width="2.8" fill="#d6d6d5"/><rect y="238.43" x="22.2" height="1" width="2.8" fill="#d6d6d5"/><rect y="244.10" x="22.2" height="1" width="2.8" fill="#d6d6d5"/><rect y="249.77" x="22.2" height="1" width="2.8" fill="#d6d6d5"/><rect y="255.43" x="20.2" height="1" width="4.8" fill="#d6d6d5"/><rect y="261.10" x="22.2" height="1" width="2.8" fill="#d6d6d5"/><rect y="266.77" x="22.2" height="1" width="2.8" fill="#d6d6d5"/><rect y="272.43" x="22.2" height="1" width="2.8" fill="#d6d6d5"/><rect y="278.10" x="22.2" height="1" width="2.8" fill="#d6d6d5"/><rect y="283.77" x="22.2" height="1" width="2.8" fill="#d6d6d5"/><rect y="289.43" x="22.2" height="1" width="2.8" fill="#d6d6d5"/><rect y="295.10" x="22.2" height="1" width="2.8" fill="#d6d6d5"/><rect y="300.77" x="20.2" height="1" width="4.8" fill="#d6d6d5"/><rect y="306.43" x="22.2" height="1" width="2.8" fill="#d6d6d5"/><rect y="312.10" x="22.2" height="1" width="2.8" fill="#d6d6d5"/><rect y="317.77" x="22.2" height="1" width="2.8" fill="#d6d6d5"/><rect y="323.43" x="22.2" height="1" width="2.8" fill="#d6d6d5"/><rect y="329.10" x="22.2" height="1" width="2.8" fill="#d6d6d5"/><rect y="334.77" x="22.2" height="1" width="2.8" fill="#d6d6d5"/><rect y="340.43" x="22.2" height="1" width="2.8" fill="#d6d6d5"/><rect y="346.10" x="15" height="1" width="10" fill="#d6d6d5"/><rect y="351.77" x="22.2" height="1" width="2.8" fill="#d6d6d5"/><rect y="357.43" x="22.2" height="1" width="2.8" fill="#d6d6d5"/><rect y="363.10" x="22.2" height="1" width="2.8" fill="#d6d6d5"/><rect y="368.77" x="22.2" height="1" width="2.8" fill="#d6d6d5"/><rect y="374.43" x="22.2" height="1" width="2.8" fill="#d6d6d5"/><rect y="380.10" x="22.2" height="1" width="2.8" fill="#d6d6d5"/><rect y="385.77" x="22.2" height="1" width="2.8" fill="#d6d6d5"/><rect y="391.43" x="20.2" height="1" width="4.8" fill="#d6d6d5"/><rect y="397.10" x="22.2" height="1" width="2.8" fill="#d6d6d5"/><rect y="402.77" x="22.2" height="1" width="2.8" fill="#d6d6d5"/><rect y="408.43" x="22.2" height="1" width="2.8" fill="#d6d6d5"/><rect y="414.10" x="22.2" height="1" width="2.8" fill="#d6d6d5"/><rect y="419.77" x="22.2" height="1" width="2.8" fill="#d6d6d5"/><rect y="425.43" x="22.2" height="1" width="2.8" fill="#d6d6d5"/><rect y="431.10" x="22.2" height="1" width="2.8" fill="#d6d6d5"/><rect y="436.77" x="20.2" height="1" width="4.8" fill="#d6d6d5"/><rect y="442.43" x="22.2" height="1" width="2.8" fill="#d6d6d5"/><rect y="448.10" x="22.2" height="1" width="2.8" fill="#d6d6d5"/><rect y="453.77" x="22.2" height="1" width="2.8" fill="#d6d6d5"/><rect y="459.43" x="22.2" height="1" width="2.8" fill="#d6d6d5"/><rect y="465.10" x="22.2" height="1" width="2.8" fill="#d6d6d5"/><rect y="470.77" x="22.2" height="1" width="2.8" fill="#d6d6d5"/><rect y="476.43" x="22.2" height="1" width="2.8" fill="#d6d6d5"/><rect y="482.10" x="15" height="1" width="10" fill="#d6d6d5"/><rect y="487.77" x="22.2" height="1" width="2.8" fill="#d6d6d5"/><rect y="493.43" x="22.2" height="1" width="2.8" fill="#d6d6d5"/><rect y="499.10" x="22.2" height="1" width="2.8" fill="#d6d6d5"/><rect y="504.77" x="22.2" height="1" width="2.8" fill="#d6d6d5"/><rect y="510.43" x="22.2" height="1" width="2.8" fill="#d6d6d5"/><rect y="516.10" x="22.2" height="1" width="2.8" fill="#d6d6d5"/><rect y="521.77" x="22.2" height="1" width="2.8" fill="#d6d6d5"/><rect y="527.43" x="20.2" height="1" width="4.8" fill="#d6d6d5"/><rect y="533.10" x="22.2" height="1" width="2.8" fill="#d6d6d5"/><rect y="538.77" x="22.2" height="1" width="2.8" fill="#d6d6d5"/><rect y="544.43" x="22.2" height="1" width="2.8" fill="#d6d6d5"/><rect y="550.10" x="22.2" height="1" width="2.8" fill="#d6d6d5"/><rect y="555.77" x="22.2" height="1" width="2.8" fill="#d6d6d5"/><rect y="561.43" x="22.2" height="1" width="2.8" fill="#d6d6d5"/><rect y="567.10" x="22.2" height="1" width="2.8" fill="#d6d6d5"/><rect y="572.77" x="20.2" height="1" width="4.8" fill="#d6d6d5"/><rect y="578.43" x="22.2" height="1" width="2.8" fill="#d6d6d5"/><rect y="584.10" x="22.2" height="1" width="2.8" fill="#d6d6d5"/><rect y="589.77" x="22.2" height="1" width="2.8" fill="#d6d6d5"/><rect y="595.43" x="22.2" height="1" width="2.8" fill="#d6d6d5"/><rect y="601.10" x="22.2" height="1" width="2.8" fill="#d6d6d5"/><rect y="606.77" x="22.2" height="1" width="2.8" fill="#d6d6d5"/><rect y="612.43" x="22.2" height="1" width="2.8" fill="#d6d6d5"/><rect y="618.10" x="15" height="1" width="10" fill="#d6d6d5"/><rect y="623.77" x="22.2" height="1" width="2.8" fill="#d6d6d5"/><rect y="629.43" x="22.2" height="1" width="2.8" fill="#d6d6d5"/><rect y="635.10" x="22.2" height="1" width="2.8" fill="#d6d6d5"/><rect y="640.77" x="22.2" height="1" width="2.8" fill="#d6d6d5"/><rect y="646.43" x="22.2" height="1" width="2.8" fill="#d6d6d5"/><rect y="652.10" x="22.2" height="1" width="2.8" fill="#d6d6d5"/><rect y="657.77" x="22.2" height="1" width="2.8" fill="#d6d6d5"/><rect y="663.43" x="20.2" height="1" width="4.8" fill="#d6d6d5"/><rect y="669.10" x="22.2" height="1" width="2.8" fill="#d6d6d5"/><rect y="674.77" x="22.2" height="1" width="2.8" fill="#d6d6d5"/><rect y="680.43" x="22.2" height="1" width="2.8" fill="#d6d6d5"/><rect y="686.10" x="22.2" height="1" width="2.8" fill="#d6d6d5"/><rect y="691.77" x="22.2" height="1" width="2.8" fill="#d6d6d5"/><rect y="697.43" x="22.2" height="1" width="2.8" fill="#d6d6d5"/><rect y="703.10" x="22.2" height="1" width="2.8" fill="#d6d6d5"/><rect y="708.77" x="20.2" height="1" width="4.8" fill="#d6d6d5"/><rect y="714.43" x="22.2" height="1" width="2.8" fill="#d6d6d5"/><rect y="720.10" x="22.2" height="1" width="2.8" fill="#d6d6d5"/><rect y="725.77" x="22.2" height="1" width="2.8" fill="#d6d6d5"/><rect y="731.43" x="22.2" height="1" width="2.8" fill="#d6d6d5"/><rect y="737.10" x="22.2" height="1" width="2.8" fill="#d6d6d5"/><rect y="742.77" x="22.2" height="1" width="2.8" fill="#d6d6d5"/><rect y="748.43" x="22.2" height="1" width="2.8" fill="#d6d6d5"/><rect y="754.10" x="15" height="1" width="10" fill="#d6d6d5"/><rect y="759.77" x="22.2" height="1" width="2.8" fill="#d6d6d5"/><rect y="765.43" x="22.2" height="1" width="2.8" fill="#d6d6d5"/><rect y="771.10" x="22.2" height="1" width="2.8" fill="#d6d6d5"/><rect y="776.77" x="22.2" height="1" width="2.8" fill="#d6d6d5"/><rect y="782.43" x="22.2" height="1" width="2.8" fill="#d6d6d5"/><rect y="788.10" x="22.2" height="1" width="2.8" fill="#d6d6d5"/><rect y="793.77" x="22.2" height="1" width="2.8" fill="#d6d6d5"/><rect y="799.43" x="20.2" height="1" width="4.8" fill="#d6d6d5"/><rect y="805.10" x="22.2" height="1" width="2.8" fill="#d6d6d5"/><rect y="810.77" x="22.2" height="1" width="2.8" fill="#d6d6d5"/><rect x="1" y="655.5" width="24" height="1" fill="#d8d8d8"/></svg><div style="left:465.9px;top:234.60px;width:0;height:0;transform:rotate(-90deg);will-change:transform"><div class="t" style="left:-2.92px;top:-8.50px;font-size:11.8px;line-height:17px;color:#c0c0bf;letter-spacing:-0.764px;">0</div></div><div style="left:465.9px;top:370.60px;width:0;height:0;transform:rotate(-90deg);will-change:transform"><div class="t" style="left:-9.22px;top:-8.50px;font-size:11.8px;line-height:17px;color:#c0c0bf;letter-spacing:-0.631px;">360</div></div><div style="left:465.9px;top:506.60px;width:0;height:0;transform:rotate(-90deg);will-change:transform"><div class="t" style="left:-9.34px;top:-8.50px;font-size:11.8px;line-height:17px;color:#c0c0bf;letter-spacing:-0.572px;">720</div></div><div style="left:465.9px;top:642.60px;width:0;height:0;transform:rotate(-90deg);will-change:transform"><div class="t" style="left:-12.68px;top:-8.50px;font-size:11.8px;line-height:17px;color:#c0c0bf;letter-spacing:-0.452px;">1080</div></div><div style="left:465.9px;top:778.60px;width:0;height:0;transform:rotate(-90deg);will-change:transform"><div class="t" style="left:-12.68px;top:-8.50px;font-size:11.8px;line-height:17px;color:#c0c0bf;letter-spacing:-0.452px;">1440</div></div><div style="left:465.9px;top:914.60px;width:0;height:0;transform:rotate(-90deg);will-change:transform"><div class="t" style="left:-12.68px;top:-8.50px;font-size:11.8px;line-height:17px;color:#c0c0bf;letter-spacing:-0.452px;">1800</div></div><div style="left:484px;top:186px;width:1074px;height:1px;background:#efeeed"></div><div style="left:484px;top:186px;width:1px;height:790px;background:#efeeed"></div>
<svg class="a" style="left:484px;top:186px" width="1074" height="790" viewBox="484 186 1074 790"><defs><clipPath id="cp1"><rect x="649.2" y="234.2" width="228.4" height="324.6"/></clipPath><clipPath id="cp2"><rect x="906.1" y="234.2" width="228.1" height="324.6"/></clipPath><clipPath id="cp3"><rect x="1163" y="234.2" width="228" height="324.7"/></clipPath><clipPath id="cp4"><rect x="649.2" y="599.5" width="228.6" height="324.6"/></clipPath></defs><rect x="649.2" y="234.2" width="228.4" height="324.6" fill="#fff"/><rect x="906.1" y="234.2" width="228.1" height="324.6" fill="#fff"/><rect x="1163" y="234.2" width="228" height="324.7" fill="#fff"/><rect x="649.2" y="599.5" width="228.6" height="324.6" fill="#fff"/><g clip-path="url(#cp1)"><path d="M739.3 356.6L815.4 287.6" fill="none" stroke="#0e0a09" stroke-linecap="round" stroke-linejoin="round" stroke-width="2.7"/><path d="M815.4 287.6C815.8 290.2 817.6 297.3 817.6 303.2C817.6 309.1 816.8 315.7 815.6 323.0C814.4 330.3 812.8 338.2 810.6 346.8C808.5 355.4 805.3 366.0 802.7 374.6C800.1 383.2 796.7 392.2 794.8 398.4C792.9 404.6 792.6 406.7 791.3 411.9C790.0 417.1 787.6 426.7 786.9 429.6" fill="none" stroke="#0e0a09" stroke-linecap="round" stroke-linejoin="round" stroke-width="3.6"/><rect x="836.6" y="340.3" width="120" height="124.5" fill="#84ad41" stroke="#0e0a09" stroke-width="4.9" stroke-linejoin="round"/><path d="M678.6 503.9C678.5 502.1 679.6 500.2 682.0 497.5C684.4 494.8 687.3 492.0 692.9 487.8C698.5 483.6 708.9 476.2 715.8 472.3C722.7 468.4 730.0 465.8 734.2 464.3C738.4 462.8 738.9 462.9 741.0 463.2C743.1 463.5 745.1 464.8 746.8 466.0C748.5 467.2 748.0 470.4 751.4 470.6C754.8 470.8 762.8 468.0 767.4 467.2C772.0 466.4 775.5 465.5 778.9 465.8C782.3 466.1 785.6 467.0 788.0 468.9C790.4 470.8 792.2 475.0 793.2 476.9C794.2 478.8 790.0 481.5 794.3 480.4C798.6 479.3 813.9 472.3 819.0 470.4C824.1 468.5 822.4 468.9 824.7 468.9C827.0 468.9 827.9 469.0 832.7 470.6C837.5 472.2 847.6 476.7 853.3 478.6C859.0 480.5 863.0 481.4 867.1 482.1C871.2 482.8 873.8 482.6 877.6 482.7C881.4 482.8 887.9 478.4 890.0 482.5C892.1 486.6 892.1 502.3 890.0 507.0C887.9 511.7 883.7 508.7 877.6 510.7C871.5 512.7 861.2 516.5 853.3 518.8C845.4 521.1 837.1 523.3 830.4 524.5C823.7 525.7 818.0 526.4 813.2 526.2C808.4 526.0 805.6 525.1 801.8 523.3C798.0 521.5 794.1 518.0 790.3 515.3C786.5 512.6 782.7 509.3 778.9 507.3C775.1 505.3 771.2 504.2 767.4 503.3C763.6 502.4 760.7 502.1 755.9 502.1C751.1 502.1 745.5 502.5 738.8 503.3C732.1 504.1 723.4 505.7 715.8 506.7C708.1 507.7 698.4 509.1 692.9 509.4C687.4 509.7 685.0 509.3 682.6 508.4C680.2 507.5 678.7 505.7 678.6 503.9Z" fill="#0e0a09"/><path d="M682.8 503.9C683.6 502.5 686.4 499.9 690.0 497.0C693.6 494.1 698.2 490.6 704.4 486.7C710.6 482.8 721.6 476.3 727.3 473.5C733.0 470.7 735.9 470.0 738.8 470.1C741.7 470.2 742.6 472.9 744.5 474.1C746.4 475.3 746.4 477.4 750.2 477.5C754.0 477.6 762.4 475.3 767.4 474.6C772.4 473.9 777.0 473.0 780.0 473.5C783.0 474.0 784.0 475.7 785.2 477.5C786.5 479.3 786.5 482.7 787.5 484.4C788.5 486.1 790.1 487.4 791.5 487.8C792.9 488.2 791.4 488.2 796.0 486.7C800.6 485.2 814.2 480.2 819.0 478.6C823.8 477.0 821.8 477.0 824.7 477.2C827.6 477.4 830.5 478.0 836.2 479.8C841.9 481.6 852.2 486.1 859.1 487.8C866.0 489.5 872.5 489.5 877.6 489.9C882.8 490.3 887.9 488.7 890.0 490.2C892.1 491.7 892.1 496.9 890.0 499.0C887.9 501.1 883.7 500.8 877.6 502.7C871.5 504.6 861.2 507.9 853.3 510.2C845.4 512.5 837.1 515.2 830.4 516.5C823.7 517.8 817.6 518.3 813.2 518.2C808.8 518.1 807.3 517.5 804.1 515.9C800.9 514.3 797.4 510.9 793.8 508.4C790.2 505.9 786.1 502.9 782.3 501.0C778.5 499.1 775.2 497.9 770.8 497.0C766.4 496.1 761.2 495.8 755.9 495.8C750.6 495.8 745.5 496.4 738.8 497.2C732.1 498.0 723.4 499.1 715.8 500.4C708.1 501.7 698.0 503.9 692.9 504.8C687.8 505.7 686.6 505.8 684.9 505.6C683.2 505.5 681.9 505.3 682.8 503.9Z" fill="#84ad41"/><path d="M820.7 565.0C809.2 564.0 820.6 561.1 820.9 558.9C821.2 556.7 820.8 554.7 822.4 552.0C824.0 549.3 827.1 545.8 830.4 542.8C833.6 539.8 838.3 536.9 841.9 534.2C845.5 531.5 850.7 528.4 852.2 526.8C853.8 525.1 850.6 525.3 851.2 524.3C851.8 523.3 853.7 521.6 855.6 521.0C857.5 520.4 860.6 520.0 862.5 520.5C864.4 521.0 865.9 522.6 867.1 523.9C868.4 525.2 868.2 527.9 870.0 528.5C871.8 529.1 874.3 527.9 877.6 527.3C880.9 526.7 887.9 518.7 890.0 525.0C892.1 531.3 901.5 558.3 890.0 565.0C878.5 571.7 832.2 566.0 820.7 565.0Z" fill="#0e0a09"/><path d="M832.7 553.7C831.9 551.0 841.2 546.1 845.3 542.8C849.4 539.4 854.6 534.3 857.3 533.6C860.0 532.9 859.4 537.4 861.4 538.8C863.4 540.1 866.7 541.3 869.4 541.7C872.1 542.1 874.2 541.4 877.6 541.1C881.0 540.8 887.9 536.0 890.0 540.0C892.1 544.0 895.0 561.3 890.0 565.0C885.0 568.7 866.7 563.0 860.0 562.0C853.3 561.0 854.4 560.3 849.9 558.9C845.4 557.5 833.5 556.4 832.7 553.7Z" fill="#e8e419"/></g><g clip-path="url(#cp2)"><path d="M961.9 315.7C964.8 313.9 974.5 307.9 979.4 305.2C984.3 302.5 988.0 300.7 991.3 299.6C994.6 298.5 996.6 298.2 999.2 298.6C1001.8 299.0 1005.0 300.1 1007.1 302.2C1009.2 304.3 1011.3 308.3 1012.1 311.1C1012.9 313.9 1012.9 314.7 1012.1 319.0C1011.3 323.3 1009.6 329.9 1007.1 336.9C1004.6 343.8 1000.2 353.4 997.2 360.7C994.2 368.0 991.6 374.3 989.3 380.6C987.0 386.9 984.6 393.5 983.3 398.4C982.0 403.3 981.5 406.8 981.3 409.9C981.1 413.0 981.5 415.2 982.3 416.9C983.1 418.6 982.8 419.6 986.3 420.2C989.8 420.8 996.4 420.7 1003.2 420.6C1010.0 420.5 1019.7 420.1 1027.0 419.7C1034.3 419.3 1043.8 418.6 1047.2 418.4" fill="none" stroke="#0e0a09" stroke-linecap="round" stroke-linejoin="round" stroke-width="3.7"/><rect x="826" y="340.3" width="118.3" height="124.5" fill="#84ad41" stroke="#0e0a09" stroke-width="4.9" stroke-linejoin="round"/><path d="M895.0 482.6C896.9 477.5 900.4 482.6 906.1 482.2C911.8 481.8 921.7 481.6 929.4 480.5C937.1 479.4 943.7 477.7 952.3 475.9C960.9 474.1 971.3 472.3 980.9 469.6C990.5 466.9 1000.0 462.7 1009.6 459.9C1019.2 457.1 1029.6 454.6 1038.2 453.0C1046.8 451.4 1054.9 450.7 1061.2 450.5C1067.5 450.3 1071.6 450.7 1076.0 451.9C1080.4 453.1 1084.6 454.9 1087.5 457.6C1090.4 460.3 1092.4 464.3 1093.2 467.9C1094.0 471.5 1093.0 475.2 1092.1 479.4C1091.1 483.6 1089.4 488.5 1087.5 493.1C1085.6 497.7 1082.7 503.4 1080.6 506.9C1078.5 510.3 1076.6 512.4 1074.9 513.8C1073.2 515.2 1071.8 515.7 1070.3 515.5C1068.8 515.3 1067.1 513.6 1065.7 512.6C1064.3 511.6 1064.4 509.8 1061.7 509.7C1059.0 509.6 1054.6 511.7 1049.7 512.0C1044.8 512.3 1039.2 512.1 1032.5 511.5C1025.8 510.9 1015.3 508.7 1009.6 508.6C1003.9 508.5 1002.9 509.3 998.1 510.9C993.3 512.5 985.7 516.5 980.9 518.3C976.1 520.1 973.3 521.4 969.5 521.8C965.7 522.2 962.8 521.9 958.0 520.6C953.2 519.3 945.6 515.7 940.8 513.8C936.0 511.9 933.2 510.1 929.4 509.2C925.6 508.3 921.8 508.3 917.9 508.6C914.0 508.9 909.9 510.2 906.1 510.9C902.3 511.6 896.9 517.7 895.0 513.0C893.1 508.3 893.1 487.7 895.0 482.6Z" fill="#0e0a09"/><path d="M895.0 490.8C896.9 488.4 900.4 490.8 906.1 490.3C911.8 489.8 921.7 489.1 929.4 488.0C937.1 486.9 943.7 485.6 952.3 484.0C960.9 482.4 971.3 480.8 980.9 478.2C990.5 475.6 1000.0 471.2 1009.6 468.5C1019.2 465.8 1029.6 463.7 1038.2 462.2C1046.8 460.7 1055.3 459.7 1061.2 459.3C1067.1 458.9 1070.4 459.1 1073.8 459.9C1077.2 460.7 1079.9 462.0 1081.8 463.9C1083.7 465.8 1085.0 468.4 1085.2 471.4C1085.4 474.4 1084.2 477.7 1082.9 481.7C1081.6 485.7 1079.0 491.4 1077.2 495.4C1075.4 499.4 1073.9 504.5 1072.0 505.7C1070.1 506.9 1067.3 503.0 1065.7 502.3C1064.1 501.6 1065.0 501.5 1062.3 501.7C1059.6 501.9 1054.7 503.5 1049.7 503.7C1044.7 503.9 1039.2 503.4 1032.5 502.9C1025.8 502.4 1015.3 500.6 1009.6 500.6C1003.9 500.6 1002.9 501.2 998.1 502.9C993.3 504.6 985.7 509.0 980.9 510.9C976.1 512.8 973.3 514.0 969.5 514.3C965.7 514.6 962.8 514.1 958.0 512.6C953.2 511.1 945.6 507.1 940.8 505.2C936.0 503.3 933.2 501.9 929.4 501.1C925.6 500.3 921.8 500.4 917.9 500.6C914.0 500.8 909.9 501.7 906.1 502.3C902.3 502.9 896.9 506.4 895.0 504.5C893.1 502.6 893.1 493.2 895.0 490.8Z" fill="#84ad41"/><path d="M895.0 529.5C896.9 523.0 901.3 528.0 906.1 526.9C910.9 525.8 918.8 523.7 923.6 522.9C928.4 522.1 931.9 521.6 935.1 522.0C938.4 522.4 941.0 523.5 943.1 525.2C945.2 526.9 947.3 529.6 947.7 532.1C948.1 534.6 946.1 538.2 945.4 540.1C944.7 542.0 941.2 542.5 943.3 543.3C945.4 544.1 954.6 544.3 958.0 544.9C961.4 545.5 962.3 545.7 963.8 547.0C965.3 548.3 966.8 550.7 967.2 552.7C967.6 554.7 966.4 556.8 966.0 559.0C965.6 561.2 976.8 564.8 965.0 566.0C953.2 567.2 906.7 572.1 895.0 566.0C883.3 559.9 893.1 536.0 895.0 529.5Z" fill="#0e0a09"/><path d="M895.0 543.8C896.9 539.7 900.4 542.6 906.1 541.3C911.8 540.0 925.7 535.5 929.4 536.1C933.1 536.7 927.8 542.1 928.2 544.7C928.6 547.3 929.6 549.4 931.7 551.6C933.8 553.8 938.7 556.7 940.8 557.9C942.9 559.1 942.8 557.6 944.3 559.0C945.8 560.4 958.2 564.8 950.0 566.0C941.8 567.2 904.2 569.7 895.0 566.0C885.8 562.3 893.1 547.9 895.0 543.8Z" fill="#e8e419"/></g><g clip-path="url(#cp3)"><path d="M1352.0 226.0C1342.8 227.3 1349.5 229.7 1345.1 234.1C1340.7 238.5 1329.1 248.6 1325.6 252.3C1322.1 256.0 1323.9 254.8 1324.3 256.3C1324.7 257.8 1326.0 260.4 1328.2 261.5C1330.4 262.6 1332.5 263.4 1337.3 263.2C1342.1 263.0 1347.9 261.9 1356.8 260.4C1365.7 258.9 1383.7 255.6 1390.9 254.3C1398.1 253.0 1398.5 257.2 1400.0 252.5C1401.5 247.8 1408.0 230.4 1400.0 226.0C1392.0 221.6 1361.2 224.7 1352.0 226.0Z" fill="#0e0a09"/><path d="M1370.8 226L1347.1 249.5Q1370 245.5 1400 238.3V226Z" fill="#e8e419"/><path d="M1244.8 301.6C1247.2 300.7 1254.6 297.6 1259.2 296.0C1263.8 294.4 1268.3 292.7 1272.2 292.3C1276.1 291.9 1279.3 292.2 1282.6 293.4C1285.8 294.5 1289.5 297.1 1291.7 299.2C1293.9 301.2 1295.8 303.5 1296.0 305.7C1296.2 307.9 1294.8 309.9 1293.0 312.2C1291.2 314.5 1287.8 317.5 1285.2 319.4C1282.6 321.2 1279.8 322.2 1277.4 323.3C1275.0 324.4 1272.2 325.0 1270.9 325.9C1269.6 326.8 1269.1 327.6 1269.3 328.5C1269.5 329.4 1270.4 330.1 1272.2 331.1C1274.0 332.1 1276.8 333.3 1280.0 334.4C1283.2 335.5 1288.5 336.2 1291.7 337.6C1295.0 339.0 1297.1 340.5 1299.5 342.8C1301.9 345.1 1304.3 347.7 1306.0 351.3C1307.7 354.9 1309.6 360.0 1309.7 364.7C1309.8 369.4 1308.8 375.2 1306.7 379.5C1304.6 383.8 1300.6 387.8 1297.0 390.5C1293.4 393.2 1289.0 394.5 1285.0 395.5C1281.0 396.5 1277.0 396.9 1273.0 396.7C1269.0 396.5 1264.7 395.6 1261.0 394.5C1257.3 393.4 1252.5 390.7 1250.8 389.9" fill="none" stroke="#0e0a09" stroke-linecap="round" stroke-linejoin="round" stroke-width="3.9"/><path d="M1150.0 412.5C1152.2 413.2 1157.9 415.0 1162.9 416.7C1167.9 418.4 1173.7 420.5 1179.8 422.7C1185.9 424.9 1193.5 428.1 1199.6 429.6C1205.7 431.2 1210.5 432.2 1216.5 432.0C1222.5 431.8 1228.8 430.7 1235.3 428.6C1241.8 426.6 1248.2 422.7 1255.2 419.7C1262.2 416.7 1270.2 412.7 1277.0 410.8C1283.8 408.9 1289.8 408.2 1295.8 408.4C1301.8 408.5 1307.2 409.6 1312.7 411.7C1318.2 413.8 1323.1 418.3 1328.6 420.7C1334.0 423.1 1340.5 425.7 1345.4 426.0C1350.4 426.3 1353.8 424.8 1358.3 422.7C1362.8 420.6 1367.9 415.9 1372.2 413.7C1376.5 411.4 1380.9 409.7 1384.1 409.2C1387.2 408.7 1389.1 410.0 1391.1 410.8C1393.1 411.6 1395.2 413.5 1396.0 414.0L1396.0 424.0C1395.2 423.2 1392.4 420.7 1391.1 419.3C1389.8 417.9 1389.3 416.4 1388.1 415.7C1386.9 415.0 1386.8 414.5 1384.1 415.3C1381.4 416.1 1376.5 418.1 1372.2 420.7C1367.9 423.2 1362.8 428.4 1358.3 430.6C1353.8 432.8 1350.4 434.1 1345.4 434.0C1340.5 433.9 1334.0 432.1 1328.6 430.2C1323.1 428.2 1318.2 424.1 1312.7 422.3C1307.2 420.6 1301.8 419.6 1295.8 419.7C1289.8 419.8 1283.8 420.5 1277.0 422.7C1270.2 424.9 1262.2 429.5 1255.2 432.6C1248.2 435.7 1241.8 439.4 1235.3 441.5C1228.8 443.6 1222.5 444.8 1216.5 445.1C1210.5 445.4 1205.7 444.6 1199.6 443.1C1193.5 441.6 1185.9 438.6 1179.8 436.2C1173.7 433.8 1167.9 430.8 1162.9 428.6C1157.9 426.4 1152.2 423.9 1150.0 423.0Z" fill="#84ad41"/><rect x="1257.4" y="471" width="160" height="69.7" fill="#84ad41" stroke="#0e0a09" stroke-width="5.2" stroke-linejoin="round"/></g><g clip-path="url(#cp4)"><path d="M640.0 592.0C648.7 588.7 683.8 590.3 692.0 592.0C700.2 593.7 687.8 599.3 689.5 602.4C691.2 605.5 699.6 608.5 702.5 610.8C705.4 613.1 706.5 614.1 706.7 616.0C706.9 617.9 706.2 619.9 703.8 621.9C701.4 623.9 697.3 625.5 692.1 627.8C686.9 630.1 677.4 634.0 672.6 635.6C667.8 637.2 666.0 637.5 663.4 637.1C660.8 636.7 658.8 635.2 656.9 633.0C655.0 630.8 653.0 626.3 651.7 623.9C650.4 621.5 651.1 620.6 649.1 618.6C647.1 616.6 641.5 616.4 640.0 612.0C638.5 607.6 631.3 595.3 640.0 592.0Z" fill="#0e0a09"/><path d="M640.0 592.0C646.0 589.7 669.8 590.8 675.8 592.0C681.8 593.2 675.7 596.9 675.8 599.4C675.9 601.9 675.7 604.6 676.5 606.9C677.3 609.2 679.0 611.8 680.4 613.4C681.8 615.0 687.3 614.9 684.9 616.7C682.5 618.5 670.0 624.7 666.0 624.1C662.0 623.5 662.5 616.0 660.8 613.4C659.1 610.8 657.5 609.3 655.6 608.2C653.7 607.1 651.7 607.1 649.1 606.7C646.5 606.3 641.5 608.5 640.0 606.0C638.5 603.5 634.0 594.3 640.0 592.0Z" fill="#e8e419"/><path d="M763.0 651.2C759.9 654.4 749.5 664.5 744.2 670.1C738.9 675.8 734.6 680.7 731.1 685.1C727.6 689.5 725.0 693.1 723.3 696.8C721.6 700.5 720.5 704.2 720.7 707.2C720.9 710.2 722.4 713.2 724.6 715.0C726.8 716.8 729.4 717.9 733.8 718.0C738.2 718.1 745.6 716.8 751.1 715.8C756.6 714.8 762.4 714.0 767.0 711.9C771.6 709.8 775.4 706.2 778.9 702.9C782.4 699.6 785.8 694.4 787.8 692.3C789.8 690.2 790.4 690.6 790.9 690.3" fill="none" stroke="#0e0a09" stroke-linecap="round" stroke-linejoin="round" stroke-width="4"/><path d="M790.9 690.3C791.2 691.9 792.5 694.9 792.8 700.0C793.0 705.1 792.7 713.7 792.4 720.8C792.1 727.9 791.4 735.7 790.8 742.6C790.2 749.5 789.1 759.0 788.8 762.3" fill="none" stroke="#0e0a09" stroke-linecap="round" stroke-linejoin="round" stroke-width="4.6"/><path d="M642.0 768.0C643.2 769.3 646.8 772.9 649.1 775.7C651.4 778.5 653.8 783.1 655.9 784.6C658.0 786.1 658.5 785.8 661.8 784.6C665.1 783.5 670.7 780.5 675.7 777.7C680.7 774.9 687.0 769.8 691.6 767.8C696.2 765.8 700.2 765.4 703.5 765.4C706.8 765.4 708.8 765.9 711.4 767.8C714.0 769.7 716.4 775.4 719.4 776.7C722.4 778.0 726.0 776.1 729.3 775.7C732.6 775.3 735.6 773.8 739.2 774.3C742.8 774.8 746.1 776.2 751.1 778.7C756.1 781.2 763.0 786.6 769.0 789.6C775.0 792.6 780.2 795.0 786.8 796.5C793.4 798.0 800.1 798.9 808.7 798.9C817.3 798.9 830.1 797.5 838.4 796.5C846.7 795.5 851.8 794.5 858.3 793.2C864.8 791.9 873.0 789.7 877.5 788.6C882.0 787.5 883.8 787.1 885.0 786.8L885.0 802.3C883.8 802.6 882.0 802.9 877.5 803.9C873.0 804.9 864.8 806.9 858.3 808.1C851.8 809.3 846.0 810.2 838.4 811.0C830.8 811.8 819.9 812.7 812.6 812.8C805.3 812.9 800.4 812.4 794.8 811.4C789.2 810.4 784.9 809.5 778.9 806.5C772.9 803.5 765.0 797.4 759.0 793.6C753.0 789.9 747.2 785.9 743.2 784.0C739.2 782.1 738.5 782.3 735.2 782.3C731.9 782.3 726.4 783.9 723.3 784.0C720.2 784.1 718.5 784.1 716.4 782.7C714.2 781.3 712.2 777.5 710.4 775.7C708.6 773.9 707.6 772.6 705.5 772.1C703.4 771.6 700.8 771.6 697.5 772.7C694.2 773.8 690.2 776.2 685.6 778.7C681.0 781.2 674.1 785.6 669.8 787.6C665.5 789.6 662.4 790.3 659.8 790.6C657.1 790.9 655.7 790.5 653.9 789.2C652.1 787.9 651.1 785.1 649.1 782.7C647.1 780.3 643.2 776.3 642.0 775.0Z" fill="#84ad41"/><rect x="630" y="836.2" width="197.5" height="70" fill="#84ad41" stroke="#0e0a09" stroke-width="4.9" stroke-linejoin="round"/></g></svg>
<div class="t" style="left:648.40px;top:213.00px;font-size:12.5px;line-height:18px;color:#1c1c1c;letter-spacing:-0.452px;">Page 1</div>
<div class="t" style="left:905.40px;top:213.00px;font-size:12.5px;line-height:18px;color:#1c1c1c;letter-spacing:-0.440px;">Page 2</div>
<div class="t" style="left:1161.90px;top:213.00px;font-size:12.5px;line-height:18px;color:#1c1c1c;letter-spacing:-0.465px;">Page 3</div>
<div class="t" style="left:648.40px;top:578.00px;font-size:12.5px;line-height:18px;color:#1c1c1c;letter-spacing:-0.490px;">Page 4</div>
<div style="left:1558px;top:161px;width:22px;height:838px;background:#3f3e3d"></div>
<div style="left:1557px;top:161px;width:1px;height:25px;background:#8a8988"></div>
<div style="left:459px;top:976px;width:1119px;height:23px;background:#3f3e3d"></div>
<div style="left:459px;top:976px;width:1099px;height:1px;background:#efefee"></div>
<div style="left:1565px;top:448px;width:9px;height:230px;background:#878787;border-radius:4.5px"></div>
<div style="left:836px;top:984px;width:332px;height:9.5px;background:#878787;border-radius:4.75px"></div>
<svg class="a" style="left:1563px;top:168px;" width="12" height="10" viewBox="0 0 12 10"><path d="M6 1L11 9H1Z" fill="#7e7e7e"/></svg>
<svg class="a" style="left:1563px;top:960px;" width="12" height="10" viewBox="0 0 12 10"><path d="M6 9L11 1H1Z" fill="#7e7e7e"/></svg>
<svg class="a" style="left:466px;top:982.5px;" width="10" height="10" viewBox="0 0 10 10"><path d="M0 5L9 0.5V9.5Z" fill="#8c8c8c"/></svg>
<svg class="a" style="left:1541px;top:982.5px;" width="10" height="10" viewBox="0 0 10 10"><path d="M10 5L1 0.5V9.5Z" fill="#8c8c8c"/></svg>
<!-- left -->
<div style="left:48px;top:131px;width:409px;height:30px;background:#2a2928"></div>
<div style="left:48px;top:161px;width:409px;height:838px;background:#3f3e3d"></div>
<div style="left:354.5px;top:133px;width:73.5px;height:28px;background:#3f3e3d"></div>
<div style="left:58px;top:141px;width:1px;height:10px;background:#8a8988"></div>
<div class="t" style="left:76.90px;top:135.00px;font-size:14px;line-height:20px;color:#d9d8d7;letter-spacing:-0.682px;">Assets</div>
<div class="t" style="left:126.27px;top:135.00px;font-size:14px;line-height:20px;color:#d9d8d7;letter-spacing:-0.328px;">Symbols</div>
<div class="t" style="left:189.30px;top:135.00px;font-size:14px;line-height:20px;color:#d9d8d7;letter-spacing:-0.280px;">Glyph Browser</div>
<div class="t" style="left:289.30px;top:135.00px;font-size:14px;line-height:20px;color:#d9d8d7;letter-spacing:-0.256px;">Character</div>
<div class="t" style="left:359.28px;top:135.00px;font-size:14px;line-height:20px;color:#ffffff;letter-spacing:-0.269px;">Paragraph</div>
<div style="left:54.6px;top:167.6px;width:237.6px;height:23.2px;background:#4a4948;border-radius:3px;box-shadow:0 1px 0 #2f2e2d"></div>
<div style="left:54.6px;top:167.6px;width:34px;height:23.2px;background:#2a2928;border-radius:3px 0 0 3px"></div>
<div style="left:88px;top:167.6px;width:1px;height:23.2px;background:#353433"></div>
<div style="left:121.9px;top:167.6px;width:1px;height:23.2px;background:#353433"></div>
<div style="left:155.8px;top:167.6px;width:1px;height:23.2px;background:#353433"></div>
<div style="left:189.7px;top:167.6px;width:1px;height:23.2px;background:#353433"></div>
<div style="left:223.6px;top:167.6px;width:1px;height:23.2px;background:#353433"></div>
<div style="left:257.5px;top:167.6px;width:1px;height:23.2px;background:#353433"></div>
<svg class="a" style="left:63.2px;top:171.2px;" width="15.6" height="17" viewBox="0 0 15.6 17"><rect x="0.00" y="0.00" width="15.60" height="1.3" fill="#d4d4d4"/><rect x="0.00" y="2.62" width="10.61" height="1.3" fill="#d4d4d4"/><rect x="0.00" y="5.24" width="15.60" height="1.3" fill="#d4d4d4"/><rect x="0.00" y="7.86" width="10.61" height="1.3" fill="#d4d4d4"/><rect x="0.00" y="10.48" width="15.60" height="1.3" fill="#d4d4d4"/><rect x="0.00" y="13.10" width="10.61" height="1.3" fill="#d4d4d4"/></svg>
<svg class="a" style="left:97.1px;top:171.2px;" width="15.6" height="17" viewBox="0 0 15.6 17"><rect x="0.00" y="0.00" width="15.60" height="1.3" fill="#d4d4d4"/><rect x="2.50" y="2.62" width="10.61" height="1.3" fill="#d4d4d4"/><rect x="0.00" y="5.24" width="15.60" height="1.3" fill="#d4d4d4"/><rect x="2.50" y="7.86" width="10.61" height="1.3" fill="#d4d4d4"/><rect x="0.00" y="10.48" width="15.60" height="1.3" fill="#d4d4d4"/><rect x="2.50" y="13.10" width="10.61" height="1.3" fill="#d4d4d4"/></svg>
<svg class="a" style="left:131px;top:171.2px;" width="15.6" height="17" viewBox="0 0 15.6 17"><rect x="0.00" y="0.00" width="15.60" height="1.3" fill="#d4d4d4"/><rect x="4.99" y="2.62" width="10.61" height="1.3" fill="#d4d4d4"/><rect x="0.00" y="5.24" width="15.60" height="1.3" fill="#d4d4d4"/><rect x="4.99" y="7.86" width="10.61" height="1.3" fill="#d4d4d4"/><rect x="0.00" y="10.48" width="15.60" height="1.3" fill="#d4d4d4"/><rect x="4.99" y="13.10" width="10.61" height="1.3" fill="#d4d4d4"/></svg>
<svg class="a" style="left:164.9px;top:171.2px;" width="15.6" height="17" viewBox="0 0 15.6 17"><rect x="0.00" y="0.00" width="15.60" height="1.3" fill="#d4d4d4"/><rect x="0.00" y="2.62" width="15.60" height="1.3" fill="#d4d4d4"/><rect x="0.00" y="5.24" width="15.60" height="1.3" fill="#d4d4d4"/><rect x="0.00" y="7.86" width="15.60" height="1.3" fill="#d4d4d4"/><rect x="0.00" y="10.48" width="15.60" height="1.3" fill="#d4d4d4"/><rect x="0.00" y="13.10" width="10.61" height="1.3" fill="#d4d4d4"/></svg>
<svg class="a" style="left:198.8px;top:171.2px;" width="15.6" height="17" viewBox="0 0 15.6 17"><rect x="0.00" y="0.00" width="15.60" height="1.3" fill="#d4d4d4"/><rect x="0.00" y="2.62" width="15.60" height="1.3" fill="#d4d4d4"/><rect x="0.00" y="5.24" width="15.60" height="1.3" fill="#d4d4d4"/><rect x="0.00" y="7.86" width="15.60" height="1.3" fill="#d4d4d4"/><rect x="0.00" y="10.48" width="15.60" height="1.3" fill="#d4d4d4"/><rect x="3.90" y="13.10" width="7.80" height="1.3" fill="#d4d4d4"/></svg>
<svg class="a" style="left:232.7px;top:171.2px;" width="15.6" height="17" viewBox="0 0 15.6 17"><rect x="0.00" y="0.00" width="15.60" height="1.3" fill="#d4d4d4"/><rect x="0.00" y="2.62" width="15.60" height="1.3" fill="#d4d4d4"/><rect x="0.00" y="5.24" width="15.60" height="1.3" fill="#d4d4d4"/><rect x="0.00" y="7.86" width="15.60" height="1.3" fill="#d4d4d4"/><rect x="0.00" y="10.48" width="15.60" height="1.3" fill="#d4d4d4"/><rect x="4.99" y="13.10" width="10.61" height="1.3" fill="#d4d4d4"/></svg>
<svg class="a" style="left:266.6px;top:171.2px;" width="15.6" height="17" viewBox="0 0 15.6 17"><rect x="0.00" y="0.00" width="15.60" height="1.3" fill="#d4d4d4"/><rect x="0.00" y="2.62" width="15.60" height="1.3" fill="#d4d4d4"/><rect x="0.00" y="5.24" width="15.60" height="1.3" fill="#d4d4d4"/><rect x="0.00" y="7.86" width="15.60" height="1.3" fill="#d4d4d4"/><rect x="0.00" y="10.48" width="15.60" height="1.3" fill="#d4d4d4"/><rect x="0.00" y="13.10" width="15.60" height="1.3" fill="#d4d4d4"/></svg>
<div style="left:53.00px;top:203.70px;width:398.00px;height:22.10px;background:#3b3a39;border:1px solid #282726;border-radius:3px;box-shadow:0 1px 0 rgba(255,255,255,0.07);"></div>
<div class="t" style="left:58.82px;top:205.00px;font-size:14px;line-height:20px;color:#ededed;letter-spacing:-0.040px;">[No Style]</div>
<svg class="a" style="left:437.50px;top:212.75px" width="8" height="4.5" viewBox="0 0 8 4.5"><path d="M0 0H8L4.0 4.5Z" fill="#e6e6e6"/></svg>
<div style="left:48px;top:236px;width:409px;height:24.5px;background:#373635"></div><svg class="a" style="left:55.2px;top:244px;" width="7.2" height="7.2" viewBox="0 0 7.2 7.2"><path d="M0 7.2H7.2V0Z" fill="#6c6b6a"/></svg><div class="t" style="left:73.20px;top:235.50px;font-size:15.5px;line-height:22px;color:#ededed;letter-spacing:-0.405px;">Spacing</div>
<div class="t" style="left:119.38px;top:270.00px;font-size:14px;line-height:20px;color:#ededed;letter-spacing:-0.073px;">Leading:</div>
<div style="left:176.00px;top:266.50px;width:272.00px;height:24.00px;background:#323130;border:1px solid #252423;border-radius:3px;box-shadow:0 1px 0 rgba(255,255,255,0.07);"></div>
<div style="left:429px;top:267.5px;width:18px;height:22px;background:#3b3a39;border-radius:0 2px 2px 0"></div>
<div style="left:428.5px;top:267.5px;width:1px;height:22px;background:#282726"></div>
<div class="t" style="left:181.22px;top:269.00px;font-size:14px;line-height:20px;color:#ededed;letter-spacing:0.165px;">[12,4 pt]</div>
<svg class="a" style="left:434.00px;top:276.25px" width="8" height="4.5" viewBox="0 0 8 4.5"><path d="M0 0H8L4.0 4.5Z" fill="#e6e6e6"/></svg>
<div style="left:78.30px;top:296.40px;width:91.90px;height:24.80px;background:#323130;border:1px solid #252423;border-radius:3px;box-shadow:0 1px 0 rgba(255,255,255,0.07);"></div>
<div class="t" style="left:84.22px;top:300.00px;font-size:14.5px;line-height:20px;color:#ededed;letter-spacing:0.203px;">0 pt</div>
<div style="left:172.40px;top:298.20px;width:11.60px;height:21.40px;background:#3a3938;border:1px solid #272625;border-radius:4px;box-shadow:0 1px 0 rgba(255,255,255,0.06)"></div><svg class="a" style="left:172.40px;top:298.20px" width="11.60" height="21.40"><path d="M2.299999999999997 8.49999999999999H9.299999999999997L5.799999999999997 4.299999999999988Z M2.299999999999997 12.899999999999988H9.299999999999997L5.799999999999997 17.099999999999987Z" fill="#e6e6e6"/></svg>
<div style="left:212.20px;top:296.40px;width:90.80px;height:24.80px;background:#323130;border:1px solid #252423;border-radius:3px;box-shadow:0 1px 0 rgba(255,255,255,0.07);"></div>
<div class="t" style="left:218.12px;top:300.00px;font-size:14.5px;line-height:20px;color:#ededed;letter-spacing:0.203px;">0 pt</div>
<div style="left:304.30px;top:298.20px;width:11.60px;height:21.40px;background:#3a3938;border:1px solid #272625;border-radius:4px;box-shadow:0 1px 0 rgba(255,255,255,0.06)"></div><svg class="a" style="left:304.30px;top:298.20px" width="11.60" height="21.40"><path d="M2.3000000000000114 8.49999999999999H9.300000000000011L5.800000000000011 4.299999999999988Z M2.3000000000000114 12.899999999999988H9.300000000000011L5.800000000000011 17.099999999999987Z" fill="#e6e6e6"/></svg>
<div style="left:344.00px;top:296.40px;width:90.90px;height:24.80px;background:#323130;border:1px solid #252423;border-radius:3px;box-shadow:0 1px 0 rgba(255,255,255,0.07);"></div>
<div class="t" style="left:349.92px;top:300.00px;font-size:14.5px;line-height:20px;color:#ededed;letter-spacing:0.203px;">0 pt</div>
<div style="left:436.40px;top:298.20px;width:11.50px;height:21.40px;background:#3a3938;border:1px solid #272625;border-radius:4px;box-shadow:0 1px 0 rgba(255,255,255,0.06)"></div><svg class="a" style="left:436.40px;top:298.20px" width="11.50" height="21.40"><path d="M2.2500000000000284 8.49999999999999H9.250000000000028L5.750000000000028 4.299999999999988Z M2.2500000000000284 12.899999999999988H9.250000000000028L5.750000000000028 17.099999999999987Z" fill="#e6e6e6"/></svg>
<div style="left:78.30px;top:326.20px;width:91.90px;height:24.90px;background:#323130;border:1px solid #252423;border-radius:3px;box-shadow:0 1px 0 rgba(255,255,255,0.07);"></div>
<div class="t" style="left:84.22px;top:330.00px;font-size:14.5px;line-height:20px;color:#ededed;letter-spacing:0.203px;">0 pt</div>
<div style="left:172.40px;top:328.00px;width:11.60px;height:21.50px;background:#3a3938;border:1px solid #272625;border-radius:4px;box-shadow:0 1px 0 rgba(255,255,255,0.06)"></div><svg class="a" style="left:172.40px;top:328.00px" width="11.60" height="21.50"><path d="M2.299999999999997 8.55H9.299999999999997L5.799999999999997 4.35Z M2.299999999999997 12.95H9.299999999999997L5.799999999999997 17.15Z" fill="#e6e6e6"/></svg>
<div style="left:212.20px;top:326.20px;width:90.80px;height:24.90px;background:#323130;border:1px solid #252423;border-radius:3px;box-shadow:0 1px 0 rgba(255,255,255,0.07);"></div>
<div class="t" style="left:218.12px;top:330.00px;font-size:14.5px;line-height:20px;color:#ededed;letter-spacing:0.203px;">0 pt</div>
<div style="left:304.30px;top:328.00px;width:11.60px;height:21.50px;background:#3a3938;border:1px solid #272625;border-radius:4px;box-shadow:0 1px 0 rgba(255,255,255,0.06)"></div><svg class="a" style="left:304.30px;top:328.00px" width="11.60" height="21.50"><path d="M2.3000000000000114 8.55H9.300000000000011L5.800000000000011 4.35Z M2.3000000000000114 12.95H9.300000000000011L5.800000000000011 17.15Z" fill="#e6e6e6"/></svg>
<div style="left:344.00px;top:326.20px;width:90.90px;height:24.90px;background:#323130;border:1px solid #252423;border-radius:3px;box-shadow:0 1px 0 rgba(255,255,255,0.07);"></div>
<div class="t" style="left:349.92px;top:330.00px;font-size:14.5px;line-height:20px;color:#ededed;letter-spacing:0.203px;">0 pt</div>
<div style="left:436.40px;top:328.00px;width:11.50px;height:21.50px;background:#3a3938;border:1px solid #272625;border-radius:4px;box-shadow:0 1px 0 rgba(255,255,255,0.06)"></div><svg class="a" style="left:436.40px;top:328.00px" width="11.50" height="21.50"><path d="M2.2500000000000284 8.55H9.250000000000028L5.750000000000028 4.35Z M2.2500000000000284 12.95H9.250000000000028L5.750000000000028 17.15Z" fill="#e6e6e6"/></svg>
<svg class="a" style="left:57px;top:299px;" width="18" height="18" viewBox="0 0 18 18"><path d="M1 9H6.5" stroke="#b9b9b9" stroke-width="1.3" fill="none"/><circle cx="6.3" cy="9" r="1.1" fill="#cfcfcf"/><rect x="9" y="1.0" width="8" height="1.3" fill="#cfcfcf"/><rect x="9" y="3.6" width="8" height="1.3" fill="#cfcfcf"/><rect x="9" y="6.2" width="8" height="1.3" fill="#cfcfcf"/><rect x="9" y="8.8" width="8" height="1.3" fill="#cfcfcf"/><rect x="9" y="11.4" width="8" height="1.3" fill="#cfcfcf"/><rect x="9" y="14.0" width="8" height="1.3" fill="#cfcfcf"/></svg><svg class="a" style="left:191px;top:299px;" width="18" height="18" viewBox="0 0 18 18"><rect x="1" y="1.0" width="8" height="1.3" fill="#cfcfcf"/><rect x="1" y="3.6" width="8" height="1.3" fill="#cfcfcf"/><rect x="1" y="6.2" width="8" height="1.3" fill="#cfcfcf"/><rect x="1" y="8.8" width="8" height="1.3" fill="#cfcfcf"/><rect x="1" y="11.4" width="8" height="1.3" fill="#cfcfcf"/><rect x="1" y="14.0" width="8" height="1.3" fill="#cfcfcf"/><path d="M11.5 9H17" stroke="#b9b9b9" stroke-width="1.3" fill="none"/><circle cx="11.7" cy="9" r="1.1" fill="#cfcfcf"/></svg><svg class="a" style="left:323px;top:299px;" width="18" height="18" viewBox="0 0 18 18"><rect x="8.3" y="1" width="1.4" height="6" fill="#cfcfcf"/><rect x="1" y="8.5" width="16" height="1.3" fill="#cfcfcf"/><rect x="1" y="11.8" width="16" height="1.3" fill="#cfcfcf"/><rect x="1" y="15" width="16" height="1.3" fill="#cfcfcf"/></svg><svg class="a" style="left:56px;top:329.5px;" width="18" height="18" viewBox="0 0 18 18"><rect x="8" y="0.5" width="8" height="1.4" fill="#cfcfcf"/><rect x="0" y="3.2" width="16" height="1.4" fill="#cfcfcf"/><rect x="0" y="5.9" width="16" height="1.4" fill="#cfcfcf"/><rect x="0" y="8.6" width="16" height="1.4" fill="#cfcfcf"/><rect x="0" y="11.3" width="16" height="1.4" fill="#cfcfcf"/><rect x="0" y="14.0" width="16" height="1.4" fill="#cfcfcf"/></svg><svg class="a" style="left:188px;top:329.5px;" width="18" height="18" viewBox="0 0 18 18"><rect x="1" y="0.5" width="10.5" height="1.4" fill="#cfcfcf"/><rect x="1" y="3.2" width="10.5" height="1.4" fill="#cfcfcf"/><rect x="1" y="5.9" width="10.5" height="1.4" fill="#cfcfcf"/><rect x="1" y="8.6" width="10.5" height="1.4" fill="#cfcfcf"/><rect x="1" y="11.3" width="10.5" height="1.4" fill="#cfcfcf"/><rect x="1" y="13.3" width="15.5" height="1.3" fill="#cfcfcf"/></svg><svg class="a" style="left:323px;top:329.5px;" width="18" height="18" viewBox="0 0 18 18"><rect x="3" y="1" width="14" height="1.3" fill="#cfcfcf"/><rect x="1" y="4.3" width="16" height="1.3" fill="#cfcfcf"/><rect x="8.3" y="7" width="1.4" height="4" fill="#cfcfcf"/><rect x="8.3" y="12.5" width="1.4" height="3.5" fill="#cfcfcf"/></svg>
<div style="left:59.70px;top:363.20px;width:13.60px;height:13.80px;background:#626160;border-radius:2.5px"></div>
<div class="t" style="left:78.27px;top:360.00px;font-size:14px;line-height:20px;color:#ededed;letter-spacing:-0.338px;">Space between same styles:</div>
<div style="left:344.00px;top:356.60px;width:90.90px;height:24.30px;background:#3b3a39;border:1px solid #2b2a29;border-radius:3px;box-shadow:0 1px 0 rgba(255,255,255,0.07);"></div>
<div class="t" style="left:349.92px;top:360.00px;font-size:14.5px;line-height:20px;color:#787776;letter-spacing:0.203px;">0 pt</div>
<div style="left:436.40px;top:358.40px;width:11.20px;height:20.90px;background:#3a3938;border:1px solid #272625;border-radius:4px;box-shadow:0 1px 0 rgba(255,255,255,0.06)"></div><svg class="a" style="left:436.40px;top:358.40px" width="11.20" height="20.90"><path d="M2.1000000000000227 8.250000000000018H9.100000000000023L5.600000000000023 4.050000000000017Z M2.1000000000000227 12.650000000000016H9.100000000000023L5.600000000000023 16.850000000000016Z" fill="#e6e6e6"/></svg>
<div style="left:59.70px;top:389.00px;width:13.60px;height:13.30px;background:#626160;border-radius:2.5px"></div>
<div class="t" style="left:78.27px;top:386.00px;font-size:14px;line-height:20px;color:#ededed;letter-spacing:-0.209px;">Sum space before and after</div>
<div class="t" style="left:63.45px;top:416.00px;font-size:14px;line-height:20px;color:#ededed;letter-spacing:-0.281px;">Use space before:</div>
<div style="left:176.00px;top:414.60px;width:274.60px;height:21.90px;background:#3c3b3a;border:1px solid #282726;border-radius:3px;box-shadow:0 1px 0 rgba(255,255,255,0.07);"></div>
<div class="t" style="left:181.57px;top:416.00px;font-size:14px;line-height:20px;color:#ededed;letter-spacing:-0.338px;">Only Between Paragraphs</div>
<svg class="a" style="left:436.50px;top:423.75px" width="8" height="4.5" viewBox="0 0 8 4.5"><path d="M0 0H8L4.0 4.5Z" fill="#e6e6e6"/></svg>
<div style="left:48px;top:442px;width:409px;height:24px;background:#373635"></div><svg class="a" style="left:56px;top:447.2px;" width="8" height="11" viewBox="0 0 8 11"><path d="M0 0L7 5.5L0 11Z" fill="#6c6b6a"/></svg><div class="t" style="left:73.59px;top:441.50px;font-size:15.5px;line-height:22px;color:#ededed;letter-spacing:-0.606px;">Tab Stops</div>
<div style="left:48px;top:466.6px;width:409px;height:25.2px;background:#373635"></div><svg class="a" style="left:55.2px;top:474.3px;" width="7.2" height="7.2" viewBox="0 0 7.2 7.2"><path d="M0 7.2H7.2V0Z" fill="#6c6b6a"/></svg><div class="t" style="left:73.67px;top:466.50px;font-size:15.5px;line-height:22px;color:#ededed;letter-spacing:-0.171px;">Justification</div>
<div style="left:79.40px;top:502.30px;width:105.40px;height:24.50px;background:#323130;border:1px solid #252423;border-radius:3px;box-shadow:0 1px 0 rgba(255,255,255,0.07);"></div>
<div class="t" style="left:85.55px;top:506.00px;font-size:14.5px;line-height:20px;color:#ededed;letter-spacing:-0.567px;">80 %</div>
<svg class="a" style="left:171.30px;top:511.50px" width="8" height="4.5" viewBox="0 0 8 4.5"><path d="M0 0H8L4.0 4.5Z" fill="#e6e6e6"/></svg>
<div style="left:212.20px;top:502.30px;width:105.60px;height:24.50px;background:#323130;border:1px solid #252423;border-radius:3px;box-shadow:0 1px 0 rgba(255,255,255,0.07);"></div>
<div class="t" style="left:217.91px;top:506.00px;font-size:14.5px;line-height:20px;color:#ededed;letter-spacing:-0.578px;">100 %</div>
<svg class="a" style="left:304.30px;top:511.50px" width="8" height="4.5" viewBox="0 0 8 4.5"><path d="M0 0H8L4.0 4.5Z" fill="#e6e6e6"/></svg>
<div style="left:345.20px;top:502.30px;width:105.40px;height:24.50px;background:#323130;border:1px solid #252423;border-radius:3px;box-shadow:0 1px 0 rgba(255,255,255,0.07);"></div>
<div class="t" style="left:350.91px;top:506.00px;font-size:14.5px;line-height:20px;color:#ededed;letter-spacing:-0.578px;">133 %</div>
<svg class="a" style="left:437.10px;top:511.50px" width="8" height="4.5" viewBox="0 0 8 4.5"><path d="M0 0H8L4.0 4.5Z" fill="#e6e6e6"/></svg>
<div style="left:79.40px;top:532.30px;width:105.40px;height:24.50px;background:#323130;border:1px solid #252423;border-radius:3px;box-shadow:0 1px 0 rgba(255,255,255,0.07);"></div>
<div class="t" style="left:85.62px;top:536.00px;font-size:14.5px;line-height:20px;color:#ededed;letter-spacing:-0.662px;">0 %</div>
<svg class="a" style="left:171.30px;top:541.50px" width="8" height="4.5" viewBox="0 0 8 4.5"><path d="M0 0H8L4.0 4.5Z" fill="#e6e6e6"/></svg>
<div style="left:212.20px;top:532.30px;width:105.60px;height:24.50px;background:#323130;border:1px solid #252423;border-radius:3px;box-shadow:0 1px 0 rgba(255,255,255,0.07);"></div>
<div class="t" style="left:218.42px;top:536.00px;font-size:14.5px;line-height:20px;color:#ededed;letter-spacing:-0.663px;">0 %</div>
<svg class="a" style="left:304.30px;top:541.50px" width="8" height="4.5" viewBox="0 0 8 4.5"><path d="M0 0H8L4.0 4.5Z" fill="#e6e6e6"/></svg>
<div style="left:345.20px;top:532.30px;width:105.40px;height:24.50px;background:#323130;border:1px solid #252423;border-radius:3px;box-shadow:0 1px 0 rgba(255,255,255,0.07);"></div>
<div class="t" style="left:351.42px;top:536.00px;font-size:14.5px;line-height:20px;color:#ededed;letter-spacing:-0.662px;">0 %</div>
<svg class="a" style="left:437.10px;top:541.50px" width="8" height="4.5" viewBox="0 0 8 4.5"><path d="M0 0H8L4.0 4.5Z" fill="#e6e6e6"/></svg>
<div class="t" style="left:54.5px;top:506.5px;font-size:7.5px;line-height:10px;color:#cfcfcf;letter-spacing:-0.3px">Az Az</div><div style="left:59.5px;top:519.5px;width:7px;height:1.2px;background:#cfcfcf"></div><div class="t" style="left:56.5px;top:536px;font-size:12.5px;line-height:14px;color:#cfcfcf;letter-spacing:-0.8px">AZ</div><div style="left:60.5px;top:550.5px;width:7px;height:1.3px;background:#cfcfcf"></div><div class="t" style="left:188.5px;top:506.5px;font-size:7.5px;line-height:10px;color:#cfcfcf;letter-spacing:-0.3px">Az Az</div><svg class="a" style="left:193.5px;top:516px;" width="8" height="6" viewBox="0 0 8 6"><path d="M1 3L3 5L7 1" stroke="#cfcfcf" stroke-width="1.2" fill="none"/></svg><div class="t" style="left:190.5px;top:536px;font-size:12.5px;line-height:14px;color:#cfcfcf;letter-spacing:-0.8px">AZ</div><svg class="a" style="left:194.5px;top:547.5px;" width="8" height="6" viewBox="0 0 8 6"><path d="M1 3L3 5L7 1" stroke="#cfcfcf" stroke-width="1.2" fill="none"/></svg><div class="t" style="left:321.0px;top:506.5px;font-size:7.5px;line-height:10px;color:#cfcfcf;letter-spacing:-0.3px">Az Az</div><div style="left:322px;top:519.5px;width:16px;height:1.4px;background:#cfcfcf"></div><div class="t" style="left:323.0px;top:536px;font-size:12.5px;line-height:14px;color:#cfcfcf;letter-spacing:-0.8px">AZ</div><div style="left:323px;top:550.5px;width:15px;height:1.5px;background:#cfcfcf"></div>
<div style="left:48px;top:562.4px;width:409px;height:24.6px;background:#373635"></div><svg class="a" style="left:55.2px;top:569.9px;" width="7.2" height="7.2" viewBox="0 0 7.2 7.2"><path d="M0 7.2H7.2V0Z" fill="#6c6b6a"/></svg><div class="t" style="left:72.66px;top:561.50px;font-size:15.5px;line-height:22px;color:#ededed;letter-spacing:-0.167px;">Bullets and Numbering</div>
<div class="t" style="left:109.32px;top:600.00px;font-size:14px;line-height:20px;color:#ededed;letter-spacing:-0.422px;">Type:</div>
<div style="left:145.40px;top:597.90px;width:196.10px;height:24.10px;background:#3c3b3a;border:1px solid #282726;border-radius:3px;box-shadow:0 1px 0 rgba(255,255,255,0.07);"></div>
<div class="t" style="left:150.88px;top:600.00px;font-size:14px;line-height:20px;color:#ededed;letter-spacing:-0.025px;">No List</div>
<svg class="a" style="left:328.00px;top:607.25px" width="8" height="4.5" viewBox="0 0 8 4.5"><path d="M0 0H8L4.0 4.5Z" fill="#e6e6e6"/></svg>
<div class="t" style="left:346.28px;top:600.00px;font-size:14px;line-height:20px;color:#ededed;letter-spacing:-0.306px;">Level:</div>
<div style="left:386.30px;top:597.90px;width:49.20px;height:24.10px;background:#3b3a39;border:1px solid #2b2a29;border-radius:3px;box-shadow:0 1px 0 rgba(255,255,255,0.07);"></div>
<div class="t" style="top:601.00px;font-size:13.5px;line-height:19px;color:#787776;letter-spacing:-0.15px;left:394.00px;">1</div>
<div style="left:438.40px;top:598.40px;width:12.40px;height:21.90px;background:#3a3938;border:1px solid #272625;border-radius:4px;box-shadow:0 1px 0 rgba(255,255,255,0.06)"></div><svg class="a" style="left:438.40px;top:598.40px" width="12.40" height="21.90"><path d="M2.700000000000017 8.74999999999999H9.700000000000017L6.200000000000017 4.549999999999988Z M2.700000000000017 13.149999999999988H9.700000000000017L6.200000000000017 17.349999999999987Z" fill="#e6e6e6"/></svg>
<div class="t" style="left:114.12px;top:630.00px;font-size:14px;line-height:20px;color:#ededed;letter-spacing:-0.450px;">Text:</div>
<div style="left:145.40px;top:627.90px;width:235.20px;height:23.60px;background:#3b3a39;border:1px solid #2b2a29;border-radius:3px;box-shadow:0 1px 0 rgba(255,255,255,0.07);"></div>
<svg class="a" style="left:154.00px;top:637.25px" width="8" height="4.5" viewBox="0 0 8 4.5"><path d="M0 0H8L4.0 4.5Z" fill="#e6e6e6"/></svg>
<div style="left:386.80px;top:627.70px;width:65.50px;height:23.80px;background:#403f3e;border:1px solid #333231;border-radius:3px;box-shadow:0 1px 0 rgba(255,255,255,0.07);"></div>
<div class="t" style="left:395.84px;top:631.00px;font-size:14.5px;line-height:20px;color:#858483;letter-spacing:0.478px;">More...</div>
<div class="t" style="left:90.52px;top:659.00px;font-size:14px;line-height:20px;color:#ededed;letter-spacing:-0.226px;">Tabstop:</div>
<div style="left:145.40px;top:657.40px;width:179.00px;height:24.00px;background:#3b3a39;border:1px solid #2b2a29;border-radius:3px;box-shadow:0 1px 0 rgba(255,255,255,0.07);"></div>
<div class="t" style="left:152.52px;top:661.00px;font-size:14.5px;line-height:20px;color:#787776;letter-spacing:0.203px;">0 pt</div>
<div style="left:327.60px;top:658.40px;width:12.20px;height:21.90px;background:#3a3938;border:1px solid #272625;border-radius:4px;box-shadow:0 1px 0 rgba(255,255,255,0.06)"></div><svg class="a" style="left:327.60px;top:658.40px" width="12.20" height="21.90"><path d="M2.5999999999999943 8.74999999999999H9.599999999999994L6.099999999999994 4.549999999999988Z M2.5999999999999943 13.149999999999988H9.599999999999994L6.099999999999994 17.349999999999987Z" fill="#e6e6e6"/></svg>
<div style="left:347.4px;top:657.4px;width:87.5px;height:23.2px;background:#3b3a39;border:1px solid #2d2c2b;border-radius:3px"></div>
<div style="left:348.4px;top:658.4px;width:27.6px;height:21.2px;background:#2a2928;border-radius:2px 0 0 2px"></div>
<div style="left:376px;top:658.4px;width:1px;height:21.2px;background:#2d2c2b"></div>
<div style="left:405px;top:658.4px;width:1px;height:21.2px;background:#2d2c2b"></div>
<svg class="a" style="left:354px;top:661.6px;" width="16" height="17" viewBox="0 0 16 17"><rect x="0.00" y="0.00" width="16.00" height="1.3" fill="#8d8c8b"/><rect x="0.00" y="2.50" width="10.88" height="1.3" fill="#8d8c8b"/><rect x="0.00" y="5.00" width="16.00" height="1.3" fill="#8d8c8b"/><rect x="0.00" y="7.50" width="10.88" height="1.3" fill="#8d8c8b"/><rect x="0.00" y="10.00" width="16.00" height="1.3" fill="#8d8c8b"/><rect x="0.00" y="12.50" width="10.88" height="1.3" fill="#8d8c8b"/></svg>
<svg class="a" style="left:383px;top:661.6px;" width="16" height="17" viewBox="0 0 16 17"><rect x="0.00" y="0.00" width="16.00" height="1.3" fill="#8d8c8b"/><rect x="2.56" y="2.50" width="10.88" height="1.3" fill="#8d8c8b"/><rect x="0.00" y="5.00" width="16.00" height="1.3" fill="#8d8c8b"/><rect x="2.56" y="7.50" width="10.88" height="1.3" fill="#8d8c8b"/><rect x="0.00" y="10.00" width="16.00" height="1.3" fill="#8d8c8b"/><rect x="2.56" y="12.50" width="10.88" height="1.3" fill="#8d8c8b"/></svg>
<svg class="a" style="left:412px;top:661.6px;" width="16" height="17" viewBox="0 0 16 17"><rect x="0.00" y="0.00" width="16.00" height="1.3" fill="#8d8c8b"/><rect x="5.12" y="2.50" width="10.88" height="1.3" fill="#8d8c8b"/><rect x="0.00" y="5.00" width="16.00" height="1.3" fill="#8d8c8b"/><rect x="5.12" y="7.50" width="10.88" height="1.3" fill="#8d8c8b"/><rect x="0.00" y="10.00" width="16.00" height="1.3" fill="#8d8c8b"/><rect x="5.12" y="12.50" width="10.88" height="1.3" fill="#8d8c8b"/></svg>
<div class="t" style="left:58.67px;top:690.00px;font-size:14px;line-height:20px;color:#ededed;letter-spacing:-0.017px;">Start numbering at:</div>
<div style="left:181.50px;top:687.60px;width:93.00px;height:23.60px;background:#3b3a39;border:1px solid #2b2a29;border-radius:3px;box-shadow:0 1px 0 rgba(255,255,255,0.07);"></div>
<div class="t" style="top:691.00px;font-size:13.5px;line-height:19px;color:#787776;letter-spacing:-0.15px;left:189.00px;">1</div>
<div style="left:277.60px;top:688.40px;width:12.20px;height:21.90px;background:#3a3938;border:1px solid #272625;border-radius:4px;box-shadow:0 1px 0 rgba(255,255,255,0.06)"></div><svg class="a" style="left:277.60px;top:688.40px" width="12.20" height="21.90"><path d="M2.5999999999999943 8.74999999999999H9.599999999999994L6.099999999999994 4.549999999999988Z M2.5999999999999943 13.149999999999988H9.599999999999994L6.099999999999994 17.349999999999987Z" fill="#e6e6e6"/></svg>
<div class="t" style="left:60.08px;top:719.00px;font-size:14px;line-height:20px;color:#ededed;letter-spacing:-0.101px;">Restart numbering:</div>
<div style="left:181.50px;top:717.50px;width:271.30px;height:22.50px;background:#3b3a39;border:1px solid #2b2a29;border-radius:3px;box-shadow:0 1px 0 rgba(255,255,255,0.07);"></div>
<div class="t" style="left:187.70px;top:719.00px;font-size:14px;line-height:20px;color:#8a8988;letter-spacing:-0.204px;">Any Non List</div>
<svg class="a" style="left:439.00px;top:727.25px" width="8" height="4.5" viewBox="0 0 8 4.5"><path d="M0 0H8L4.0 4.5Z" fill="#8a8988"/></svg>
<div style="left:182.20px;top:748.40px;width:12.70px;height:12.50px;background:#504f4e;border-radius:2.5px"></div>
<div class="t" style="left:200.38px;top:745.00px;font-size:14px;line-height:20px;color:#a6a5a4;letter-spacing:-0.107px;">Restart numbering now</div>
<div class="t" style="left:100.58px;top:772.00px;font-size:14px;line-height:20px;color:#ededed;letter-spacing:0.012px;">Name:</div>
<div style="left:145.40px;top:769.60px;width:238.10px;height:25.80px;background:#3b3a39;border:1px solid #2b2a29;border-radius:3px;box-shadow:0 1px 0 rgba(255,255,255,0.07);"></div>
<div style="left:390.00px;top:776.20px;width:13.20px;height:13.20px;background:#504f4e;border-radius:2.5px"></div>
<div class="t" style="left:408.60px;top:773.00px;font-size:14px;line-height:20px;color:#a6a5a4;letter-spacing:-0.030px;">Global</div>
<div class="t" style="left:108.27px;top:803.00px;font-size:14px;line-height:20px;color:#ededed;letter-spacing:-0.282px;">Style:</div>
<div style="left:145.40px;top:801.80px;width:307.40px;height:21.80px;background:#3b3a39;border:1px solid #2b2a29;border-radius:3px;box-shadow:0 1px 0 rgba(255,255,255,0.07);"></div>
<div class="t" style="left:151.02px;top:804.00px;font-size:14px;line-height:20px;color:#8a8988;letter-spacing:-0.007px;">[No Style]</div>
<svg class="a" style="left:439.00px;top:811.25px" width="8" height="4.5" viewBox="0 0 8 4.5"><path d="M0 0H8L4.0 4.5Z" fill="#8a8988"/></svg>
<div style="left:6px;top:135px;width:34px;height:34px;background:#282726;border-radius:5px"></div><svg class="a" style="left:13px;top:141px;" width="20" height="22" viewBox="0 0 20 22"><path d="M5 2V17.5L9 14L11.8 20L14.2 19L11.5 13.2H16.5Z" fill="#3a3938" stroke="#e8e8e8" stroke-width="1.3" stroke-linejoin="round"/></svg><svg class="a" style="left:11px;top:174px;" width="24" height="24" viewBox="0 0 24 24"><rect x="3.5" y="4.5" width="18.5" height="17.5" fill="none" stroke="#3fa0e0" stroke-width="1.5" stroke-dasharray="4 2"/><path d="M1 4H7M4 1V7" stroke="#3fa0e0" stroke-width="1.5"/><rect x="6" y="7" width="14" height="12.5" rx="1" fill="#b9b8b6"/><rect x="6" y="7" width="14" height="2.5" fill="#dddcda"/><rect x="6" y="17" width="14" height="1" fill="#8a8988"/></svg><svg class="a" style="left:14px;top:212px;" width="16" height="18" viewBox="0 0 16 18"><path d="M3 2L14 10.5L8 11.5L3.5 16.5Z" fill="#fff"/></svg><svg class="a" style="left:32px;top:228px;" width="7" height="7" viewBox="0 0 7 7"><path d="M0 7H7V0Z" fill="#d0d0d0"/></svg><svg class="a" style="left:12px;top:243px;" width="24" height="24" viewBox="0 0 24 24"><path d="M4 20C4 12 9 7 18 6" stroke="#e8e8e8" stroke-width="1.3" fill="none"/><path d="M2 3L11 12" stroke="#3fa0e0" stroke-width="1.3"/><circle cx="7.5" cy="9" r="2" fill="#3fa0e0"/><circle cx="4" cy="20.5" r="1.8" fill="#fff"/><circle cx="18" cy="6" r="1.8" fill="#fff"/><path d="M18 6H22" stroke="#fff" stroke-width="1"/></svg><svg class="a" style="left:11px;top:276px;" width="24" height="24" viewBox="0 0 24 24"><circle cx="11.5" cy="12.5" r="10.3" fill="#2f2e2d" stroke="#e4e4e4" stroke-width="1.2"/><circle cx="11.5" cy="12.5" r="7.3" fill="none" stroke="#3fa0e0" stroke-width="1.5"/><circle cx="11.5" cy="12.5" r="4.3" fill="none" stroke="#e4e4e4" stroke-width="1.2"/><path d="M12.5 12L20.5 4.5" stroke="#ee6fa8" stroke-width="1.6"/><path d="M22.5 2.5L21.8 7L18 3.3Z" fill="#ee6fa8"/></svg><svg class="a" style="left:11px;top:310px;" width="24" height="24" viewBox="0 0 24 24"><path d="M2 22L6 12L15 6L19 10L13 19Z" fill="#f0b13c"/><path d="M2 22L9 15" stroke="#5a3a10" stroke-width="1.2"/><path d="M15 6L18 2L22 6L19 10Z" fill="#8b4a3a"/><path d="M17 3L21 7" stroke="#d8d8d8" stroke-width="1.4"/></svg><svg class="a" style="left:11px;top:344px;" width="24" height="24" viewBox="0 0 24 24"><path d="M3 17L16 3L20 7L7 20L2 21Z" fill="#3fa0e0"/><path d="M16 3L18 1L22 5L20 7Z" fill="#e0504a"/><path d="M3 17L7 20L2 21Z" fill="#f0c9a0"/><path d="M4 23C9 19 13 25 20 21" stroke="#e8e8e8" stroke-width="1" fill="none"/></svg><svg class="a" style="left:11px;top:378px;" width="24" height="24" viewBox="0 0 24 24"><path d="M10 12L19 2L22 5L13 15Z" fill="#c8c8c8"/><path d="M18 1L23 5L21 8L16 4Z" fill="#d6453f"/><path d="M4 18C5 13 9 11 13 15C12 19 8 20 4 18Z" fill="#a05a28"/><path d="M2 17C8 23 14 17 22 22" stroke="#3f8fd0" stroke-width="1.2" fill="none"/></svg><svg class="a" style="left:11px;top:412px;" width="24" height="24" viewBox="0 0 24 24"><defs><clipPath id="cw"><circle cx="11.5" cy="13" r="10"/></clipPath></defs><g clip-path="url(#cw)"><path d="M11.5 13L11.5 0L24 5Z" fill="#f2b92a"/><path d="M11.5 13L24 5L24 18Z" fill="#8fc23f"/><path d="M11.5 13L24 18L14 26Z" fill="#34b0a0"/><path d="M11.5 13L14 26L0 24Z" fill="#3f7fd8"/><path d="M11.5 13L0 24L-1 9Z" fill="#9a50c8"/><path d="M11.5 13L-1 9L11.5 0Z" fill="#e8463f"/></g><circle cx="11.5" cy="13" r="4" fill="#3a3938"/><path d="M12 12L21 3" stroke="#efefef" stroke-width="1.8"/><circle cx="11.5" cy="12.5" r="1.6" fill="#efefef"/></svg><svg class="a" style="left:14px;top:446px;" width="18" height="26" viewBox="0 0 18 26"><path d="M4.5 1.5H13.5C14.5 8 13 13 9 13.5C5 13 3.5 8 4.5 1.5Z" fill="#e9e6f2" stroke="#bdb9cc" stroke-width="0.8"/><path d="M5 7H13C13 10.5 11.5 12.7 9 13C6.5 12.7 5 10.5 5 7Z" fill="#b6aed4"/><rect x="8.3" y="13.5" width="1.4" height="8" fill="#d9d6e6"/><path d="M4.5 22.5H13.5V24H4.5Z" fill="#d9d6e6"/></svg><svg class="a" style="left:11px;top:482px;" width="24" height="20" viewBox="0 0 24 20"><rect x="0.5" y="0.5" width="22" height="17.5" fill="#dfe6ee" stroke="#c9c9c9" stroke-width="1"/><rect x="1.5" y="1.5" width="20" height="15.5" fill="#6aa7df"/><path d="M1.5 12L8 6L13 10L17 8L21.5 11V17H1.5Z" fill="#1f3556"/><path d="M1.5 13C8 10 14 15 21.5 12V17H1.5Z" fill="#2a5a98"/><circle cx="17" cy="5" r="1.8" fill="#f5c13a"/><path d="M6.5 7.5L8 6L9.5 7.2Z" fill="#fff"/></svg><svg class="a" style="left:11px;top:514px;" width="24" height="24" viewBox="0 0 24 24"><path d="M5 1V18H22M1 5H18V22" stroke="#c4c4c4" stroke-width="1.7" fill="none"/><path d="M2 21L21 2" stroke="#c4c4c4" stroke-width="1.3"/></svg><div style="left:14px;top:551.5px;width:18px;height:17.5px;background:linear-gradient(#459fe3,#2c7fd2);border-radius:1px"></div><div style="left:14px;top:585px;width:17.5px;height:17.5px;background:linear-gradient(#459fe3,#2c7fd2);border-radius:50%"></div><div style="left:14px;top:619px;width:18px;height:17.5px;background:linear-gradient(#459fe3,#2c7fd2);border-radius:4.5px"></div><svg class="a" style="left:12px;top:651px;" width="24" height="22" viewBox="0 0 24 22"><path d="M3 8L5 1L9 4H14L18 0.5L20 8C20 8 21 12 20 15C19 19 15 20.5 11.5 20.5C8 20.5 4 19 3 15C2 12 3 8 3 8Z" fill="#3fa0e0"/><circle cx="8.5" cy="11" r="1" fill="#1f5f90"/><circle cx="14.5" cy="11" r="1" fill="#1f5f90"/><path d="M1 12.5L6 13.5M1 16L6 15M22 12.5L17 13.5M22 16L17 15" stroke="#1f5f90" stroke-width="0.7"/></svg><svg class="a" style="left:32px;top:670px;" width="7" height="7" viewBox="0 0 7 7"><path d="M0 7H7V0Z" fill="#d0d0d0"/></svg><div class="t" style="left:13px;top:684px;font-family:'Liberation Serif',serif;font-size:26px;line-height:28px;color:#c9c9c9">A</div><svg class="a" style="left:32px;top:703px;" width="7" height="7" viewBox="0 0 7 7"><path d="M0 7H7V0Z" fill="#d0d0d0"/></svg><svg class="a" style="left:11px;top:718px;" width="24" height="24" viewBox="0 0 24 24"><path d="M2 22L4 17L13 8L16 11L7 20Z" fill="#b9b9b9"/><path d="M12 6L18 12L20 10L14 4Z" fill="#6a5a3a"/><circle cx="18" cy="6" r="4" fill="#e0a43a"/></svg><svg class="a" style="left:12px;top:751px;" width="24" height="26" viewBox="0 0 24 26"><path d="M6 12L3.5 6.5C3 5 5 4.2 5.8 5.8L8 10V3C8 1.3 10.3 1.3 10.4 3L10.8 9L12.3 2.2C12.7 0.6 14.9 1 14.7 2.8L13.9 9.6L16.6 4.6C17.4 3.2 19.3 4.2 18.7 5.8L16 12.5L19.6 10.6C21 10 22 11.6 20.8 12.6L15 19C13 21.5 8.5 21.5 7 18.5Z" fill="#f6cdb0" stroke="#d89a78" stroke-width="0.7"/></svg><svg class="a" style="left:12px;top:786px;" width="24" height="26" viewBox="0 0 24 26"><path d="M14 14L20 21" stroke="#e08a4a" stroke-width="2.6" stroke-linecap="round"/><circle cx="9.5" cy="9.5" r="8" fill="#9fd0f2" stroke="#f2f2f2" stroke-width="1.8"/><path d="M5 8C6 5.5 8 4.5 10 4.5" stroke="#e6f4fd" stroke-width="1.3" fill="none"/></svg>
<!-- right -->
<div style="left:1582px;top:131px;width:338px;height:30px;background:#2a2928"></div><div style="left:1657.5px;top:133px;width:50px;height:28px;background:#3f3e3d"></div><div style="left:1591px;top:141px;width:1px;height:10px;background:#8a8988"></div><div class="t" style="left:1609.30px;top:136.00px;font-size:14px;line-height:20px;color:#d9d8d7;letter-spacing:0.096px;">Colour</div><div class="t" style="left:1662.47px;top:136.00px;font-size:14px;line-height:20px;color:#ffffff;letter-spacing:-0.120px;">Stroke</div><div class="t" style="left:1712.18px;top:136.00px;font-size:14px;line-height:20px;color:#d9d8d7;letter-spacing:-0.478px;">Brushes</div><div class="t" style="left:1771.47px;top:136.00px;font-size:14px;line-height:20px;color:#d9d8d7;letter-spacing:-0.539px;">Swatches</div><div class="t" style="left:1840.20px;top:136.00px;font-size:14px;line-height:20px;color:#d9d8d7;letter-spacing:-0.303px;">Appearance</div>
<div style="left:1582px;top:161px;width:338px;height:41px;background:#3f3e3d"></div>
<div style="left:1582px;top:202px;width:338px;height:332px;background:#333231"></div>
<div class="t" style="left:1598.57px;top:172.00px;font-size:14px;line-height:20px;color:#ededed;letter-spacing:-0.302px;">Style:</div>
<div style="left:1646.70px;top:172.70px;width:116.00px;height:21.90px;background:#3a3938;border:1px solid #2a2928;border-radius:3px;box-shadow:0 1px 0 rgba(255,255,255,0.07)"></div><div style="left:1647.7px;top:173.7px;width:27.8px;height:19.9px;background:#2a2928;border-radius:2px"></div><div style="left:1675.2px;top:173.7px;width:1px;height:19.9px;background:#2a2928"></div><div style="left:1704.2px;top:173.7px;width:1px;height:19.9px;background:#2a2928"></div><div style="left:1733.2px;top:173.7px;width:1px;height:19.9px;background:#2a2928"></div>
<svg class="a" style="left:1651px;top:174px;" width="24" height="20" viewBox="0 0 24 20"><circle cx="10" cy="10" r="8" fill="none" stroke="#c9c9c9" stroke-width="1.3"/><path d="M5 15L15.5 4.5" stroke="#e8463f" stroke-width="2"/></svg>
<svg class="a" style="left:1680px;top:174px;" width="24" height="20" viewBox="0 0 24 20"><path d="M3 17L17 3" stroke="#b9b9b9" stroke-width="1.8"/></svg>
<svg class="a" style="left:1709px;top:174px;" width="24" height="20" viewBox="0 0 24 20"><path d="M3 17L17 3" stroke="#b9b9b9" stroke-width="1.8" stroke-dasharray="3.5 3"/></svg>
<svg class="a" style="left:1738px;top:174px;" width="24" height="20" viewBox="0 0 24 20"><path d="M13 3C15 1 18 3 16 6L11 11L8.5 9Z" fill="#b9b9b9"/><path d="M8 9.5L11 12C10 15 6 17.5 2 17C5 15 5 11.5 8 9.5Z" fill="#b9b9b9"/></svg>
<div class="t" style="left:1599.13px;top:212.00px;font-size:14px;line-height:20px;color:#ededed;letter-spacing:0.252px;">Width:</div>
<div style="left:1655px;top:220.2px;width:166px;height:1.2px;background:#4a4948;border-radius:1px"></div>
<div style="left:1647px;top:214.2px;width:13px;height:13px;background:radial-gradient(circle at 45% 35%,#e8e8e8,#9c9c9c);border-radius:50%"></div>
<div style="left:1652.6px;top:218.5px;width:1.4px;height:1.4px;background:#3f7fd8;border-radius:50%"></div>
<div style="left:1826.70px;top:208.70px;width:79.80px;height:23.80px;background:#323130;border:1px solid #252423;border-radius:3px;box-shadow:0 1px 0 rgba(255,255,255,0.07);"></div>
<div class="t" style="left:1832.32px;top:212.00px;font-size:14.5px;line-height:20px;color:#ededed;letter-spacing:0.237px;">0 pt</div>
<div class="t" style="left:1598.50px;top:238.00px;font-size:14px;line-height:20px;color:#ededed;letter-spacing:-0.327px;">Cap:</div>
<div style="left:1646.70px;top:238.70px;width:86.30px;height:22.30px;background:#3a3938;border:1px solid #2a2928;border-radius:3px;box-shadow:0 1px 0 rgba(255,255,255,0.07)"></div><div style="left:1647.7px;top:239.7px;width:27.57px;height:20.3px;background:#2a2928;border-radius:2px"></div><div style="left:1674.97px;top:239.7px;width:1px;height:20.3px;background:#2a2928"></div><div style="left:1703.73px;top:239.7px;width:1px;height:20.3px;background:#2a2928"></div>
<svg class="a" style="left:1651px;top:240px;" width="20" height="20" viewBox="0 0 20 20"><path d="M3 4H11A6 6 0 0 1 11 16H3" fill="none" stroke="#dcdcdc" stroke-width="1.3"/><path d="M3 10H11" stroke="#3fa0e0" stroke-width="1.3"/><circle cx="11" cy="10" r="2.3" fill="#3fa0e0"/><circle cx="11" cy="10" r="0.9" fill="#bfe0f5"/></svg>
<svg class="a" style="left:1679.8px;top:240px;" width="20" height="20" viewBox="0 0 20 20"><path d="M3 4H15V16H3" fill="none" stroke="#dcdcdc" stroke-width="1.3"/><path d="M3 10H15" stroke="#3fa0e0" stroke-width="1.3"/><circle cx="15.5" cy="10" r="2.3" fill="#3fa0e0"/><circle cx="15.5" cy="10" r="0.9" fill="#bfe0f5"/></svg>
<svg class="a" style="left:1708.6px;top:240px;" width="20" height="20" viewBox="0 0 20 20"><path d="M3 4H17V16H3" fill="none" stroke="#dcdcdc" stroke-width="1.3"/><path d="M3 10H11" stroke="#3fa0e0" stroke-width="1.3"/><circle cx="11.5" cy="10" r="2.3" fill="#3fa0e0"/><circle cx="11.5" cy="10" r="0.9" fill="#bfe0f5"/></svg>
<div class="t" style="left:1598.99px;top:268.00px;font-size:14px;line-height:20px;color:#ededed;letter-spacing:-0.255px;">Join:</div>
<div style="left:1646.70px;top:268.00px;width:86.30px;height:22.00px;background:#3a3938;border:1px solid #2a2928;border-radius:3px;box-shadow:0 1px 0 rgba(255,255,255,0.07)"></div><div style="left:1647.7px;top:269px;width:27.57px;height:20px;background:#2a2928;border-radius:2px"></div><div style="left:1674.97px;top:269px;width:1px;height:20px;background:#2a2928"></div><div style="left:1703.73px;top:269px;width:1px;height:20px;background:#2a2928"></div>
<svg class="a" style="left:1651px;top:269px;" width="20" height="20" viewBox="0 0 20 20"><path d="M3 3V11A6 6 0 0 0 9 17H18" fill="none" stroke="#dcdcdc" stroke-width="1.3"/><path d="M13 3V8H18" fill="none" stroke="#dcdcdc" stroke-width="1.3"/><path d="M8 3V12H18" fill="none" stroke="#3fa0e0" stroke-width="1.3"/><circle cx="8.5" cy="11.5" r="2.3" fill="#3fa0e0"/><circle cx="8.5" cy="11.5" r="0.9" fill="#bfe0f5"/></svg>
<svg class="a" style="left:1679.8px;top:269px;" width="20" height="20" viewBox="0 0 20 20"><path d="M3 3V12L8 17H18" fill="none" stroke="#dcdcdc" stroke-width="1.3"/><path d="M13 3V8H18" fill="none" stroke="#dcdcdc" stroke-width="1.3"/><path d="M8 3V12H18" fill="none" stroke="#3fa0e0" stroke-width="1.3"/><circle cx="8.5" cy="11.5" r="2.3" fill="#3fa0e0"/><circle cx="8.5" cy="11.5" r="0.9" fill="#bfe0f5"/></svg>
<svg class="a" style="left:1708.6px;top:269px;" width="20" height="20" viewBox="0 0 20 20"><path d="M3 3V17H18" fill="none" stroke="#dcdcdc" stroke-width="1.3"/><path d="M13 3V8H18" fill="none" stroke="#dcdcdc" stroke-width="1.3"/><path d="M8 3V12H18" fill="none" stroke="#3fa0e0" stroke-width="1.3"/><circle cx="8.5" cy="11.5" r="2.3" fill="#3fa0e0"/><circle cx="8.5" cy="11.5" r="0.9" fill="#bfe0f5"/></svg>
<div class="t" style="left:1785.58px;top:268.00px;font-size:14px;line-height:20px;color:#ededed;letter-spacing:0.450px;">Mitre:</div>
<div style="left:1826.70px;top:265.00px;width:79.80px;height:24.00px;background:#323130;border:1px solid #252423;border-radius:3px;box-shadow:0 1px 0 rgba(255,255,255,0.07);"></div>
<div class="t" style="left:1832.91px;top:268.00px;font-size:14.5px;line-height:20px;color:#ededed;letter-spacing:-0.944px;">1,5</div>
<div class="t" style="left:1599.20px;top:297.00px;font-size:14px;line-height:20px;color:#ededed;letter-spacing:0.112px;">Align:</div>
<div style="left:1646.70px;top:296.70px;width:86.30px;height:22.30px;background:#3a3938;border:1px solid #2a2928;border-radius:3px;box-shadow:0 1px 0 rgba(255,255,255,0.07)"></div><div style="left:1647.7px;top:297.7px;width:27.57px;height:20.3px;background:#2a2928;border-radius:2px"></div><div style="left:1674.97px;top:297.7px;width:1px;height:20.3px;background:#2a2928"></div><div style="left:1703.73px;top:297.7px;width:1px;height:20.3px;background:#2a2928"></div>
<svg class="a" style="left:1651px;top:297.5px;" width="20" height="20" viewBox="0 0 20 20"><path d="M3 18V10A7 7 0 0 1 10 3H18" fill="none" stroke="#dcdcdc" stroke-width="1.3"/><path d="M13 18V14A2 2 0 0 1 15 12H18" fill="none" stroke="#dcdcdc" stroke-width="1.3"/><path d="M8 18V8.5H18" fill="none" stroke="#3fa0e0" stroke-width="1.3"/><circle cx="8.5" cy="8.5" r="2.3" fill="#3fa0e0"/><circle cx="8.5" cy="8.5" r="0.9" fill="#bfe0f5"/></svg>
<svg class="a" style="left:1679.8px;top:297.5px;" width="20" height="20" viewBox="0 0 20 20"><path d="M5 18V5H18" fill="none" stroke="#3fa0e0" stroke-width="1.3"/><circle cx="5.5" cy="5" r="2.3" fill="#3fa0e0"/><circle cx="5.5" cy="5" r="0.9" fill="#bfe0f5"/><path d="M12 18V14A3 3 0 0 1 15 11H18" fill="none" stroke="#dcdcdc" stroke-width="1.3"/></svg>
<svg class="a" style="left:1708.6px;top:297.5px;" width="20" height="20" viewBox="0 0 20 20"><path d="M4 18V9A6 6 0 0 1 10 3H18" fill="none" stroke="#dcdcdc" stroke-width="1.3"/><path d="M12 18V12H18" fill="none" stroke="#3fa0e0" stroke-width="1.3"/><circle cx="12.5" cy="12" r="2.3" fill="#3fa0e0"/><circle cx="12.5" cy="12" r="0.9" fill="#bfe0f5"/></svg>
<div style="left:1587px;top:335px;width:328px;height:1px;background:#4b4a49"></div>
<div style="left:1587px;top:393px;width:328px;height:1px;background:#4b4a49"></div>
<div style="left:1587px;top:481px;width:328px;height:1px;background:#4b4a49"></div>
<div class="t" style="left:1598.57px;top:354.00px;font-size:14px;line-height:20px;color:#ededed;letter-spacing:0.154px;">Order:</div>
<div style="left:1647.00px;top:354.60px;width:57.40px;height:22.40px;background:#3a3938;border:1px solid #2a2928;border-radius:3px;box-shadow:0 1px 0 rgba(255,255,255,0.07)"></div><div style="left:1676.2px;top:355.6px;width:27.5px;height:20.4px;background:#2a2928;border-radius:2px"></div><div style="left:1675.2px;top:355.6px;width:1px;height:20.4px;background:#2a2928"></div>
<svg class="a" style="left:1652px;top:356.5px;" width="20" height="20" viewBox="0 0 20 20"><rect x="2.5" y="3" width="9" height="9" rx="2" fill="none" stroke="#3fa0e0" stroke-width="1.8"/><rect x="7" y="8" width="9" height="9" rx="2" fill="#bdbdbd"/></svg>
<svg class="a" style="left:1681px;top:356.5px;" width="20" height="20" viewBox="0 0 20 20"><rect x="7" y="8" width="9" height="9" rx="2" fill="#bdbdbd"/><rect x="2.5" y="3" width="9" height="9" rx="2" fill="#2a2928" stroke="#3fa0e0" stroke-width="1.8"/><rect x="5.7" y="6.2" width="2.6" height="2.6" fill="#3fa0e0"/></svg>
<div style="left:1786.00px;top:357.00px;width:13.00px;height:13.00px;background:#666564;border-radius:2.5px"></div>
<div class="t" style="left:1804.77px;top:354.00px;font-size:14px;line-height:20px;color:#ededed;letter-spacing:-0.163px;">Scale with object</div>
<div class="t" style="left:1598.97px;top:413.00px;font-size:14px;line-height:20px;color:#5e5d5c;letter-spacing:-0.220px;">Start:</div>
<div style="left:1647.00px;top:413.00px;width:54.00px;height:23.70px;background:#424140;border:1px solid #2b2a29;border-radius:3px;box-shadow:0 1px 0 rgba(255,255,255,0.07);"></div>
<svg class="a" style="left:1688.00px;top:422.85px" width="7" height="4" viewBox="0 0 7 4"><path d="M0 0H7L3.5 4Z" fill="#a09f9e"/></svg>
<div style="left:1707.50px;top:413.00px;width:80.20px;height:23.70px;background:#333231;border:1px solid #2b2a29;border-radius:3px;box-shadow:0 1px 0 rgba(255,255,255,0.07);"></div>
<svg class="a" style="left:1775.00px;top:422.85px" width="7" height="4" viewBox="0 0 7 4"><path d="M0 0H7L3.5 4Z" fill="#a09f9e"/></svg>
<div class="t" style="left:1598.48px;top:443.00px;font-size:14px;line-height:20px;color:#5e5d5c;letter-spacing:-0.463px;">End:</div>
<div style="left:1647.00px;top:443.00px;width:54.00px;height:23.50px;background:#424140;border:1px solid #2b2a29;border-radius:3px;box-shadow:0 1px 0 rgba(255,255,255,0.07);"></div>
<svg class="a" style="left:1688.00px;top:452.75px" width="7" height="4" viewBox="0 0 7 4"><path d="M0 0H7L3.5 4Z" fill="#a09f9e"/></svg>
<div style="left:1707.50px;top:443.00px;width:80.20px;height:23.50px;background:#333231;border:1px solid #2b2a29;border-radius:3px;box-shadow:0 1px 0 rgba(255,255,255,0.07);"></div>
<svg class="a" style="left:1775.00px;top:452.75px" width="7" height="4" viewBox="0 0 7 4"><path d="M0 0H7L3.5 4Z" fill="#a09f9e"/></svg>
<svg class="a" style="left:1793px;top:428px;" width="7" height="19" viewBox="0 0 7 19"><rect x="1" y="0.8" width="4.6" height="6.4" rx="2.3" fill="none" stroke="#6a6968" stroke-width="1.2"/><rect x="1" y="11.3" width="4.6" height="6.4" rx="2.3" fill="none" stroke="#6a6968" stroke-width="1.2"/><path d="M3.3 5V14" stroke="#6a6968" stroke-width="1.4"/></svg>
<div style="left:1848.00px;top:413.00px;width:58.50px;height:23.50px;background:#3a3938;border:1px solid #2a2928;border-radius:3px;box-shadow:0 1px 0 rgba(255,255,255,0.07)"></div><div style="left:1849px;top:414px;width:28.05px;height:21.5px;background:#2a2928;border-radius:2px"></div><div style="left:1876.75px;top:414px;width:1px;height:21.5px;background:#2a2928"></div>
<svg class="a" style="left:1853px;top:415px;" width="22" height="20" viewBox="0 0 22 20"><path d="M3 10H13" stroke="#8f8e8d" stroke-width="1.4"/><path d="M11 6.5L16 10L11 13.5Z" fill="#8f8e8d"/><path d="M16.5 1V19" stroke="#3f6f9f" stroke-width="1" stroke-dasharray="1.5 1.5"/></svg>
<svg class="a" style="left:1882.5px;top:415px;" width="22" height="20" viewBox="0 0 22 20"><path d="M3 10H13" stroke="#8f8e8d" stroke-width="1.4"/><path d="M11 6.5L16 10L11 13.5Z" fill="#8f8e8d"/><path d="M12 1V19" stroke="#3f6f9f" stroke-width="1" stroke-dasharray="1.5 1.5"/></svg>
<div style="left:1883.00px;top:444.00px;width:23.50px;height:21.40px;background:#373635;border:1px solid #2f2e2d;border-radius:3px;box-shadow:0 1px 0 rgba(255,255,255,0.07);"></div>
<svg class="a" style="left:1886px;top:446px;" width="18" height="18" viewBox="0 0 18 18"><path d="M3.2 8A6 6 0 0 1 14 5.5M14.8 10A6 6 0 0 1 4 12.5" fill="none" stroke="#b4b3b2" stroke-width="1.4"/><path d="M15.8 3.2V7.2H11.8Z M2.2 14.8V10.8H6.2Z" fill="#b4b3b2"/></svg>
<div style="left:1599.50px;top:497.30px;width:98.50px;height:24.40px;background:#434241;border:1px solid #3d3c3b;border-radius:3px;box-shadow:0 1px 0 rgba(255,255,255,0.07);"></div>
<div class="t" style="left:1609.40px;top:499.00px;font-size:15px;line-height:21px;color:#ededed;letter-spacing:-0.100px;">Properties...</div>
<div class="t" style="left:1705.38px;top:500.00px;font-size:14px;line-height:20px;color:#ededed;letter-spacing:-0.471px;">Pressure:</div>
<div style="left:1765.80px;top:497.30px;width:99.00px;height:24.40px;background:#434241;border:1px solid #323130;border-radius:3px;box-shadow:0 1px 0 rgba(255,255,255,0.07);"></div>
<div style="left:1768px;top:499px;width:95px;height:1px;background:#8a8988"></div>
<div style="left:1582px;top:534px;width:338px;height:30px;background:#2a2928"></div><div style="left:1605px;top:536px;width:71.7px;height:28px;background:#3f3e3d"></div><div style="left:1591px;top:544px;width:1px;height:10px;background:#8a8988"></div><div class="t" style="left:1609.92px;top:538.00px;font-size:14px;line-height:20px;color:#ffffff;letter-spacing:-0.286px;">Transform</div><div class="t" style="left:1681.38px;top:538.00px;font-size:14px;line-height:20px;color:#d9d8d7;letter-spacing:0.047px;">History</div><div class="t" style="left:1736.04px;top:538.00px;font-size:14px;line-height:20px;color:#d9d8d7;letter-spacing:0.055px;">Isometric</div>
<div style="left:1582px;top:564px;width:338px;height:130px;background:#3f3e3d"></div>
<svg class="a" style="left:1609px;top:590px;" width="46" height="46" viewBox="0 0 46 46"><rect x="4" y="4" width="38" height="38" fill="#6a6968"/><rect x="0.0" y="0.0" width="7.6" height="7.6" fill="#6a6968"/><rect x="0.0" y="19.2" width="7.6" height="7.6" fill="#6a6968"/><rect x="0.0" y="38.4" width="7.6" height="7.6" fill="#6a6968"/><rect x="19.2" y="0.0" width="7.6" height="7.6" fill="#6a6968"/><rect x="19.2" y="38.4" width="7.6" height="7.6" fill="#6a6968"/><rect x="38.4" y="0.0" width="7.6" height="7.6" fill="#6a6968"/><rect x="38.4" y="19.2" width="7.6" height="7.6" fill="#6a6968"/><rect x="38.4" y="38.4" width="7.6" height="7.6" fill="#6a6968"/></svg>
<div class="t" style="left:1679.65px;top:582.00px;font-size:14px;line-height:20px;color:#5c5b5a;letter-spacing:-0.750px;">X:</div>
<div style="left:1696.50px;top:578.30px;width:80.20px;height:24.70px;background:#3d3c3b;border:1px solid #2a2928;border-radius:3px;box-shadow:0 1px 0 rgba(255,255,255,0.07);"></div>
<div class="t" style="left:1702.72px;top:582.00px;font-size:14.5px;line-height:20px;color:#a3a2a1;letter-spacing:0.037px;">0 pt</div>
<div class="t" style="left:1791.18px;top:582.00px;font-size:14px;line-height:20px;color:#5c5b5a;letter-spacing:-0.420px;">W:</div>
<div style="left:1812.00px;top:578.30px;width:81.00px;height:24.70px;background:#3d3c3b;border:1px solid #2a2928;border-radius:3px;box-shadow:0 1px 0 rgba(255,255,255,0.07);"></div>
<div class="t" style="left:1818.22px;top:582.00px;font-size:14.5px;line-height:20px;color:#a3a2a1;letter-spacing:0.037px;">0 pt</div>
<div class="t" style="left:1679.65px;top:612.00px;font-size:14px;line-height:20px;color:#5c5b5a;letter-spacing:0.020px;">Y:</div>
<div style="left:1696.50px;top:608.50px;width:80.20px;height:24.20px;background:#3d3c3b;border:1px solid #2a2928;border-radius:3px;box-shadow:0 1px 0 rgba(255,255,255,0.07);"></div>
<div class="t" style="left:1702.72px;top:612.00px;font-size:14.5px;line-height:20px;color:#a3a2a1;letter-spacing:0.037px;">0 pt</div>
<div class="t" style="left:1793.48px;top:612.00px;font-size:14px;line-height:20px;color:#5c5b5a;letter-spacing:0.150px;">H:</div>
<div style="left:1812.00px;top:608.50px;width:81.00px;height:24.20px;background:#3d3c3b;border:1px solid #2a2928;border-radius:3px;box-shadow:0 1px 0 rgba(255,255,255,0.07);"></div>
<div class="t" style="left:1818.22px;top:612.00px;font-size:14.5px;line-height:20px;color:#a3a2a1;letter-spacing:0.037px;">0 pt</div>
<div class="t" style="left:1678.88px;top:650.00px;font-size:14px;line-height:20px;color:#5c5b5a;letter-spacing:-0.750px;">R:</div>
<div style="left:1696.50px;top:646.00px;width:80.20px;height:24.80px;background:#3d3c3b;border:1px solid #2a2928;border-radius:3px;box-shadow:0 1px 0 rgba(255,255,255,0.07);"></div>
<div class="t" style="left:1702.72px;top:650.00px;font-size:14.5px;line-height:20px;color:#a3a2a1;letter-spacing:-0.129px;">0 °</div>
<svg class="a" style="left:1764.20px;top:655.40px" width="7" height="4" viewBox="0 0 7 4"><path d="M0 0H7L3.5 4Z" fill="#a3a2a1"/></svg>
<div class="t" style="left:1796.87px;top:650.00px;font-size:14px;line-height:20px;color:#5c5b5a;letter-spacing:-2.470px;">S:</div>
<div style="left:1812.00px;top:646.00px;width:81.00px;height:24.80px;background:#3d3c3b;border:1px solid #2a2928;border-radius:3px;box-shadow:0 1px 0 rgba(255,255,255,0.07);"></div>
<div class="t" style="left:1818.22px;top:650.00px;font-size:14.5px;line-height:20px;color:#a3a2a1;letter-spacing:-0.129px;">0 °</div>
<svg class="a" style="left:1880.50px;top:655.40px" width="7" height="4" viewBox="0 0 7 4"><path d="M0 0H7L3.5 4Z" fill="#a3a2a1"/></svg>
<svg class="a" style="left:1901px;top:597px;" width="7" height="19" viewBox="0 0 7 19"><rect x="1" y="0.8" width="4.6" height="6.4" rx="2.3" fill="none" stroke="#a3a2a1" stroke-width="1.3"/><rect x="1" y="11.3" width="4.6" height="6.4" rx="2.3" fill="none" stroke="#a3a2a1" stroke-width="1.3"/><path d="M3.3 5V14" stroke="#a3a2a1" stroke-width="1.5"/></svg>
<div style="left:1582px;top:694.5px;width:338px;height:29.5px;background:#2a2928"></div><div style="left:1605px;top:696.5px;width:49.4px;height:27.5px;background:#3f3e3d"></div><div style="left:1591px;top:704.5px;width:1px;height:10px;background:#8a8988"></div><div class="t" style="left:1609.08px;top:698.00px;font-size:14px;line-height:20px;color:#ffffff;letter-spacing:-0.498px;">Layers</div><div class="t" style="left:1659.08px;top:698.00px;font-size:14px;line-height:20px;color:#d9d8d7;letter-spacing:-0.258px;">Effects</div><div class="t" style="left:1711.47px;top:698.00px;font-size:14px;line-height:20px;color:#d9d8d7;letter-spacing:-0.526px;">Styles</div><div class="t" style="left:1758.30px;top:698.00px;font-size:14px;line-height:20px;color:#d9d8d7;letter-spacing:-0.865px;">Cns</div><div class="t" style="left:1792.27px;top:698.00px;font-size:14px;line-height:20px;color:#d9d8d7;letter-spacing:-0.415px;">Snp</div>
<svg class="a" style="left:1899px;top:703px;" width="16" height="12" viewBox="0 0 16 12"><rect x="0" y="1" width="10" height="1.3" fill="#d0d0d0"/><rect x="0" y="3.6" width="10" height="1.3" fill="#d0d0d0"/><rect x="0" y="6.2" width="10" height="1.3" fill="#d0d0d0"/><rect x="0" y="8.8" width="10" height="1.3" fill="#d0d0d0"/><path d="M11.5 9H15.5L13.5 11Z" fill="#d0d0d0"/></svg>
<div style="left:1582px;top:724px;width:338px;height:36px;background:#3f3e3d"></div>
<div class="t" style="left:1591.87px;top:732.00px;font-size:14px;line-height:20px;color:#5a5958;letter-spacing:-0.746px;">Opacity:</div>
<div style="left:1642.20px;top:729.30px;width:93.20px;height:24.00px;background:#3d3c3b;border:1px solid #2a2928;border-radius:3px;box-shadow:0 1px 0 rgba(255,255,255,0.07);"></div>
<div class="t" style="left:1648.71px;top:733.00px;font-size:14.5px;line-height:20px;color:#a3a2a1;letter-spacing:-0.766px;">100 %</div>
<svg class="a" style="left:1722.50px;top:738.50px" width="7" height="4" viewBox="0 0 7 4"><path d="M0 0H7L3.5 4Z" fill="#a3a2a1"/></svg>
<div style="left:1740.80px;top:729.30px;width:117.50px;height:24.00px;background:#484746;border:1px solid #2a2928;border-radius:3px;box-shadow:0 1px 0 rgba(255,255,255,0.07);"></div>
<div class="t" style="left:1746.54px;top:732.00px;font-size:14.5px;line-height:20px;color:#a3a2a1;letter-spacing:0.042px;">Normal</div>
<svg class="a" style="left:1845.50px;top:739.00px" width="7" height="4" viewBox="0 0 7 4"><path d="M0 0H7L3.5 4Z" fill="#a3a2a1"/></svg>
<svg class="a" style="left:1864.5px;top:733px;" width="16" height="16" viewBox="0 0 16 16"><g transform="translate(8 8)"><rect x="-1.6" y="-7.8" width="3.2" height="15.6" rx="0.6" fill="#c9c9c9" transform="rotate(0)"/><rect x="-1.6" y="-7.8" width="3.2" height="15.6" rx="0.6" fill="#c9c9c9" transform="rotate(45)"/><rect x="-1.6" y="-7.8" width="3.2" height="15.6" rx="0.6" fill="#c9c9c9" transform="rotate(90)"/><rect x="-1.6" y="-7.8" width="3.2" height="15.6" rx="0.6" fill="#c9c9c9" transform="rotate(135)"/><circle r="5.3" fill="#c9c9c9"/><circle r="2.3" fill="#3f3e3d"/></g></svg>
<svg class="a" style="left:1894.5px;top:732.5px;" width="12" height="16" viewBox="0 0 12 16"><path d="M3 8V4.5A3 3 0 0 1 9 4.5V8" fill="none" stroke="#c9c9c9" stroke-width="1.6"/><rect x="0.8" y="7.5" width="10.4" height="7.5" rx="1.2" fill="#c9c9c9"/></svg>
<div style="left:1582px;top:760px;width:338px;height:212px;background:#333231"></div>
<div style="left:1582px;top:760.4px;width:316px;height:36.6px;background:#525150"></div>
<div style="left:1582px;top:797px;width:316px;height:1.4px;background:#111"></div>
<svg class="a" style="left:1585px;top:769.9px;" width="18" height="18" viewBox="0 0 18 18"><circle cx="9" cy="9" r="9" fill="#323130"/><path d="M5.2 3.6V14.4L14.6 9Z" fill="#c4c3c2"/></svg>
<div style="left:1608px;top:761px;width:35px;height:35px;background:#2a2928;border:1px solid #131211"></div>
<svg class="a" style="left:1609px;top:762px;" width="33" height="33" viewBox="0 0 33 33"><path d="M5.5 1.2L8.5 2.2" stroke="#e8e419" stroke-width="1.6"/><path d="M16.5 5.5L12.3 11C13 12.8 16.5 12 18.6 9.5L19.3 16" stroke="#111" stroke-width="0.9" fill="none"/><path d="M5 19.5C8 17.5 9 18 11 18S17 22 28 20" stroke="#84ad41" stroke-width="1.2" fill="none"/><rect x="5" y="24" width="18" height="6.5" fill="#84ad41"/></svg>
<div class="t" style="left:1647.12px;top:768.00px;font-size:15px;line-height:21px;color:#ffffff;letter-spacing:-0.085px;font-weight:bold;">Page 4</div>
<div class="t" style="left:1698.90px;top:768.00px;font-size:15px;line-height:21px;color:#dddcdb;letter-spacing:0.156px;">(Artboard)</div>
<div style="left:1879px;top:771.0px;width:15px;height:15px;border:1.3px solid #c4c3c2;border-radius:3px"></div>
<svg class="a" style="left:1881px;top:773.4px;" width="11" height="11" viewBox="0 0 11 11"><path d="M1.5 6L4.3 9L9.5 1.5" stroke="#e4e3e2" stroke-width="1.6" fill="none"/></svg>
<div style="left:1582px;top:798.4px;width:316px;height:36.6px;background:#525150"></div>
<div style="left:1582px;top:835px;width:316px;height:1.4px;background:#111"></div>
<svg class="a" style="left:1585px;top:807.9px;" width="18" height="18" viewBox="0 0 18 18"><circle cx="9" cy="9" r="9" fill="#323130"/><path d="M5.2 3.6V14.4L14.6 9Z" fill="#c4c3c2"/></svg>
<div style="left:1608px;top:799px;width:35px;height:35px;background:#2a2928;border:1px solid #131211"></div>
<svg class="a" style="left:1609px;top:800px;" width="33" height="33" viewBox="0 0 33 33"><path d="M23 2L27 1" stroke="#e8e419" stroke-width="1.6"/><path d="M14 7C19 5 19 10 16 11C20 12 19 17 14 17" stroke="#1a1a1a" stroke-width="0.8" fill="none"/><path d="M5 19C9 22 12 17 17 18S22 21 28 18" stroke="#84ad41" stroke-width="1.4" fill="none"/><rect x="15" y="23.5" width="13" height="6.5" fill="#84ad41"/></svg>
<div class="t" style="left:1647.12px;top:806.00px;font-size:15px;line-height:21px;color:#ffffff;letter-spacing:0.005px;font-weight:bold;">Page 3</div>
<div class="t" style="left:1698.90px;top:806.00px;font-size:15px;line-height:21px;color:#dddcdb;letter-spacing:0.156px;">(Artboard)</div>
<div style="left:1879px;top:809.0px;width:15px;height:15px;border:1.3px solid #c4c3c2;border-radius:3px"></div>
<svg class="a" style="left:1881px;top:811.4px;" width="11" height="11" viewBox="0 0 11 11"><path d="M1.5 6L4.3 9L9.5 1.5" stroke="#e4e3e2" stroke-width="1.6" fill="none"/></svg>
<div style="left:1582px;top:836.4px;width:316px;height:36.6px;background:#525150"></div>
<div style="left:1582px;top:873px;width:316px;height:1.4px;background:#111"></div>
<svg class="a" style="left:1585px;top:845.9px;" width="18" height="18" viewBox="0 0 18 18"><circle cx="9" cy="9" r="9" fill="#323130"/><path d="M5.2 3.6V14.4L14.6 9Z" fill="#c4c3c2"/></svg>
<div style="left:1608px;top:837px;width:35px;height:35px;background:#2a2928;border:1px solid #131211"></div>
<svg class="a" style="left:1609px;top:838px;" width="33" height="33" viewBox="0 0 33 33"><rect x="5" y="10.5" width="4" height="13" fill="#84ad41"/><path d="M12 8C16 5 17 8 14 14L13 19H19" stroke="#1a1a1a" stroke-width="0.8" fill="none"/><path d="M5 25.5C12 25 18 21.5 23 22.5C24 25 22 27 20 27.5C14 26.5 11 29 5 27.5Z" fill="#84ad41"/><path d="M5 31L8 31.5" stroke="#e8e419" stroke-width="1.8"/></svg>
<div class="t" style="left:1647.12px;top:844.00px;font-size:15px;line-height:21px;color:#ffffff;letter-spacing:0.020px;font-weight:bold;">Page 2</div>
<div class="t" style="left:1698.90px;top:844.00px;font-size:15px;line-height:21px;color:#dddcdb;letter-spacing:0.156px;">(Artboard)</div>
<div style="left:1879px;top:847.0px;width:15px;height:15px;border:1.3px solid #c4c3c2;border-radius:3px"></div>
<svg class="a" style="left:1881px;top:849.4px;" width="11" height="11" viewBox="0 0 11 11"><path d="M1.5 6L4.3 9L9.5 1.5" stroke="#e4e3e2" stroke-width="1.6" fill="none"/></svg>
<div style="left:1582px;top:874.4px;width:316px;height:36.6px;background:#525150"></div>
<div style="left:1582px;top:911px;width:316px;height:1.4px;background:#111"></div>
<svg class="a" style="left:1585px;top:883.9px;" width="18" height="18" viewBox="0 0 18 18"><circle cx="9" cy="9" r="9" fill="#323130"/><path d="M5.2 3.6V14.4L14.6 9Z" fill="#c4c3c2"/></svg>
<div style="left:1608px;top:875px;width:35px;height:35px;background:#2a2928;border:1px solid #131211"></div>
<svg class="a" style="left:1609px;top:876px;" width="33" height="33" viewBox="0 0 33 33"><rect x="24" y="10.5" width="4" height="13" fill="#84ad41"/><path d="M14 14L22 6C23 12 21 18 19 22" stroke="#151515" stroke-width="0.8" fill="none"/><path d="M9 27C13 24 15 23.5 17 25C20 24 22 26 28 26V28.5C23 29.5 20 29 18 27.5C15 27 12 27.5 9 27Z" fill="#84ad41"/><path d="M25 31.5L28 31" stroke="#e8e419" stroke-width="1.8"/></svg>
<div class="t" style="left:1647.12px;top:882.00px;font-size:15px;line-height:21px;color:#ffffff;letter-spacing:-0.025px;font-weight:bold;">Page 1</div>
<div class="t" style="left:1698.90px;top:882.00px;font-size:15px;line-height:21px;color:#dddcdb;letter-spacing:0.156px;">(Artboard)</div>
<div style="left:1879px;top:885.0px;width:15px;height:15px;border:1.3px solid #c4c3c2;border-radius:3px"></div>
<svg class="a" style="left:1881px;top:887.4px;" width="11" height="11" viewBox="0 0 11 11"><path d="M1.5 6L4.3 9L9.5 1.5" stroke="#e4e3e2" stroke-width="1.6" fill="none"/></svg>
<div style="left:1582px;top:972px;width:338px;height:27px;background:#3f3e3d"></div>
<div style="left:1588px;top:973.4px;width:25.7px;height:24.4px;background:#2a2928"></div>
<svg class="a" style="left:1590.5px;top:976px;" width="21" height="19" viewBox="0 0 21 19"><path d="M1 3L10.5 7L20 3V6L10.5 10L1 6Z M1 8L10.5 12L20 8V11L10.5 15L1 11Z M1 13L10.5 17L20 13V15.5L10.5 19.5L1 15.5Z" fill="#c9c9c9"/></svg>
<svg class="a" style="left:1703px;top:978px;" width="18" height="16" viewBox="0 0 18 16"><rect x="0" y="0.5" width="18" height="15" fill="#b4b3b2"/><circle cx="9" cy="8" r="5" fill="#3f3e3d"/></svg>
<svg class="a" style="left:1732px;top:978px;" width="16" height="16" viewBox="0 0 16 16"><circle cx="8" cy="8" r="7" fill="none" stroke="#b4b3b2" stroke-width="1.5"/><path d="M10.5 1.5A7 7 0 0 0 5.5 14.5Z" fill="#b4b3b2"/></svg>
<div class="t" style="left:1759px;top:974px;font-family:'Liberation Serif',serif;font-style:italic;font-size:20px;line-height:22px;color:#b4b3b2;letter-spacing:0.6px">fx</div>
<svg class="a" style="left:1839.5px;top:978.5px;" width="13" height="16" viewBox="0 0 13 16"><path d="M1 0.8H7.5L12 5.3V15.2H1Z" fill="none" stroke="#b4b3b2" stroke-width="1.4"/><path d="M7.2 1V5.6H12" fill="none" stroke="#b4b3b2" stroke-width="1.2"/></svg>
<svg class="a" style="left:1867.5px;top:978.5px;" width="13" height="16" viewBox="0 0 13 16"><rect x="0.0" y="0.0" width="2.5" height="2.5" fill="#b4b3b2"/><rect x="0.0" y="2.5" width="2.5" height="2.5" fill="#6a6968"/><rect x="0.0" y="5.0" width="2.5" height="2.5" fill="#b4b3b2"/><rect x="0.0" y="7.5" width="2.5" height="2.5" fill="#6a6968"/><rect x="0.0" y="10.0" width="2.5" height="2.5" fill="#b4b3b2"/><rect x="0.0" y="12.5" width="2.5" height="2.5" fill="#6a6968"/><rect x="2.5" y="0.0" width="2.5" height="2.5" fill="#6a6968"/><rect x="2.5" y="2.5" width="2.5" height="2.5" fill="#b4b3b2"/><rect x="2.5" y="5.0" width="2.5" height="2.5" fill="#6a6968"/><rect x="2.5" y="7.5" width="2.5" height="2.5" fill="#b4b3b2"/><rect x="2.5" y="10.0" width="2.5" height="2.5" fill="#6a6968"/><rect x="2.5" y="12.5" width="2.5" height="2.5" fill="#b4b3b2"/><rect x="5.0" y="0.0" width="2.5" height="2.5" fill="#b4b3b2"/><rect x="5.0" y="2.5" width="2.5" height="2.5" fill="#6a6968"/><rect x="5.0" y="5.0" width="2.5" height="2.5" fill="#b4b3b2"/><rect x="5.0" y="7.5" width="2.5" height="2.5" fill="#6a6968"/><rect x="5.0" y="10.0" width="2.5" height="2.5" fill="#b4b3b2"/><rect x="5.0" y="12.5" width="2.5" height="2.5" fill="#6a6968"/><rect x="7.5" y="0.0" width="2.5" height="2.5" fill="#6a6968"/><rect x="7.5" y="2.5" width="2.5" height="2.5" fill="#b4b3b2"/><rect x="7.5" y="5.0" width="2.5" height="2.5" fill="#6a6968"/><rect x="7.5" y="7.5" width="2.5" height="2.5" fill="#b4b3b2"/><rect x="7.5" y="10.0" width="2.5" height="2.5" fill="#6a6968"/><rect x="7.5" y="12.5" width="2.5" height="2.5" fill="#b4b3b2"/><rect x="10.0" y="0.0" width="2.5" height="2.5" fill="#b4b3b2"/><rect x="10.0" y="2.5" width="2.5" height="2.5" fill="#6a6968"/><rect x="10.0" y="5.0" width="2.5" height="2.5" fill="#b4b3b2"/><rect x="10.0" y="7.5" width="2.5" height="2.5" fill="#6a6968"/><rect x="10.0" y="10.0" width="2.5" height="2.5" fill="#b4b3b2"/><rect x="10.0" y="12.5" width="2.5" height="2.5" fill="#6a6968"/></svg>
<svg class="a" style="left:1896.5px;top:976.5px;" width="12" height="18" viewBox="0 0 12 18"><rect x="3.5" y="0.5" width="5" height="2" fill="#b4b3b2"/><rect x="0" y="2.3" width="12" height="2" rx="0.8" fill="#b4b3b2"/><path d="M1.2 5.5H10.8V17H1.2Z" fill="none" stroke="#b4b3b2" stroke-width="1.4"/><path d="M4.3 6V16.5M7.7 6V16.5" stroke="#b4b3b2" stroke-width="1.2"/></svg>
</body></html>
